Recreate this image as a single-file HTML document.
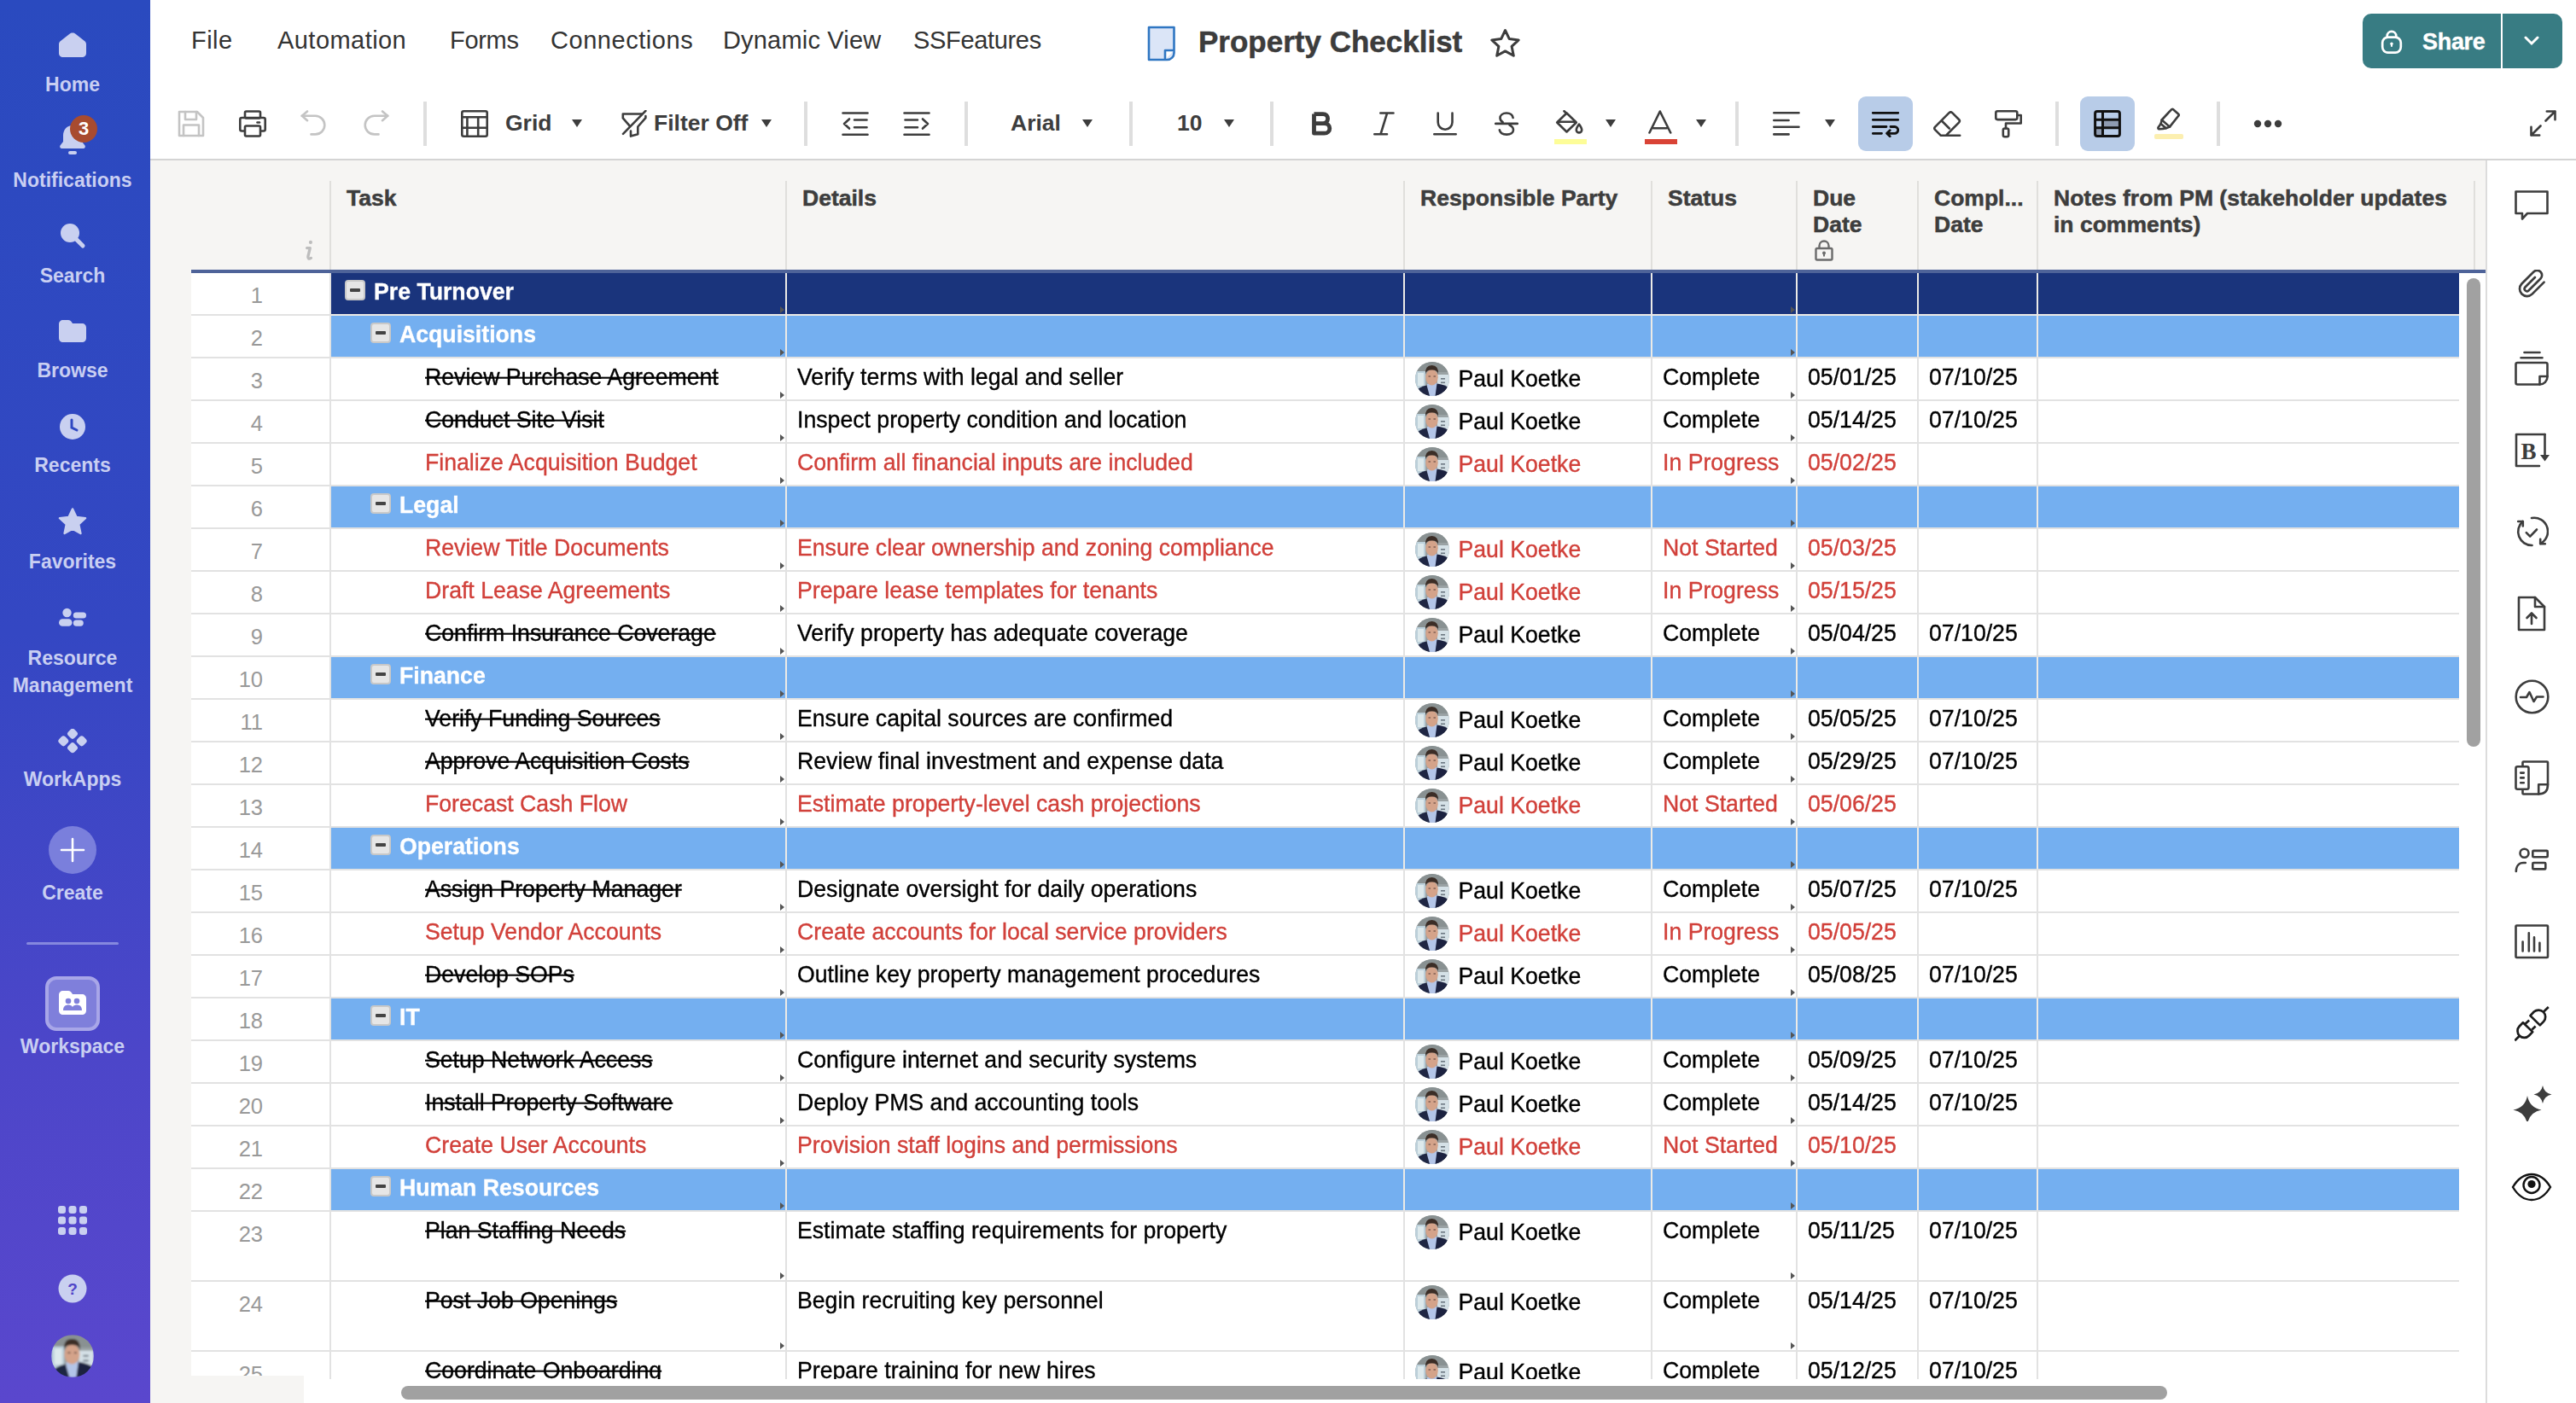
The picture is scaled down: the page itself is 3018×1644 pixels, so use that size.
<!DOCTYPE html>
<html><head><meta charset="utf-8">
<style>
*{box-sizing:border-box;margin:0;padding:0}
html,body{width:3018px;height:1644px;overflow:hidden;background:#fff;font-family:"Liberation Sans",sans-serif}
.abs{position:absolute}
#sb{position:absolute;left:0;top:0;width:176px;height:1644px;background:linear-gradient(180deg,#2a4abf 0%,#3447c3 45%,#4c46c9 75%,#5a47cd 100%)}
.sbi{position:absolute;left:-3px;width:176px;text-align:center;color:#c9cff2;font-weight:700;font-size:23px;line-height:27px}
.sbico{position:absolute}
#menu .m{position:absolute;top:27px;font-size:29px;line-height:40px;color:#333;white-space:nowrap;letter-spacing:0.45px}
#title{position:absolute;left:1404px;top:26.5px;-webkit-text-stroke:0.5px #3c3c3c;font-size:35px;font-weight:700;color:#3c3c3c;line-height:44px;white-space:nowrap;letter-spacing:0px}
#share{position:absolute;left:2768px;top:16px;width:234px;height:64px;background:#387c83;border-radius:10px}
.tsep{position:absolute;top:119px;width:4px;height:52px;background:#dedede}
.tt{position:absolute;top:126px;font-size:26.5px;font-weight:700;color:#3d3d3d;line-height:36px;white-space:nowrap}
.dd{position:absolute;top:140px;width:0;height:0;border-left:6px solid transparent;border-right:6px solid transparent;border-top:9px solid #3d3d3d}
.ico{position:absolute}
#tbline{position:absolute;left:176px;top:186px;width:2842px;height:2px;background:#d4d4d4}
#hdrbg{position:absolute;left:176px;top:188px;width:2736px;height:1456px;background:#f6f5f3}
.hsep{position:absolute;top:212px;width:2px;height:104px;background:#e0dfdc}
.ht{position:absolute;top:216.5px;margin-left:1px;font-size:26.5px;font-weight:700;color:#3d3d3d;line-height:31px;white-space:nowrap;-webkit-text-stroke:0.5px #3d3d3d}
#bluel{position:absolute;left:224px;top:316px;width:2688px;height:4px;background:#4e6399}
#gridclip{position:absolute;left:0;top:320px;width:3018px;height:1296px;overflow:hidden}
.row{position:absolute;left:224px;width:2657px;background:#e2e2e2}
.row>div{position:absolute}
.num{left:0;top:0;width:162px;background:#fff}
.gsep{background:#eceae6}
.numt{position:absolute;right:78px;top:11px;font-size:25.5px;line-height:30px;color:#999;}
.cell{top:0;background:#fff}
.t{top:0;font-size:26.67px;line-height:44px;white-space:nowrap;color:#000;-webkit-text-stroke:0.35px currentColor;transform:scaleY(1.04);transform-origin:0 31px}
.rr .t{color:#d1403a}
.rc .task{text-decoration:line-through;text-decoration-thickness:2px}
.gt{top:0;font-size:26.67px;line-height:44px;font-weight:700;color:#fff;white-space:nowrap;-webkit-text-stroke:0.35px #fff;transform:scaleY(1.04);transform-origin:0 31px}
.cbox{top:8px;width:24px;height:24px;background:#e6e6e6;border:2px solid #c8c8c8;border-radius:4px}
.cbox i{position:absolute;left:4px;top:8px;width:12px;height:4px;background:#444;border-radius:1px}
.tri{top:0;width:0;height:0;border-top:4px solid transparent;border-bottom:4px solid transparent;border-left:5px solid #555}
.av{position:absolute;left:1434px;top:4px}
#rp{position:absolute;left:2912px;top:188px;width:106px;height:1456px;background:#fff;border-left:2px solid #dcdcdc}
.rpi{position:absolute}
</style></head><body>
<svg width="0" height="0" style="position:absolute"><defs><filter id="avblur" x="-10%" y="-10%" width="120%" height="120%"><feGaussianBlur stdDeviation="0.7"/></filter></defs></svg>
<!-- SIDEBAR -->
<div id="sb">
 <svg class="sbico" style="left:68px;top:37px" width="34" height="31" viewBox="0 0 34 31"><path d="M17 1.5 C18.5 1.5 19.5 2 20.5 2.8 L31 11 C32.3 12 33 13.3 33 15 V25 C33 28.5 31 30 28 30 H6 C3 30 1 28.5 1 25 V15 C1 13.3 1.7 12 3 11 L13.5 2.8 C14.5 2 15.5 1.5 17 1.5Z" fill="#c9d0f0"/></svg>
 <div class="sbi" style="top:86px">Home</div>
 <svg class="sbico" style="left:68px;top:144px" width="36" height="40" viewBox="0 0 36 40"><path d="M17 3 C10 3 6 8.5 6 15 V22 L2.5 26.5 C1.5 28 2.5 30 4.5 30 H29.5 C31.5 30 32.5 28 31.5 26.5 L28 22 V15 C28 8.5 24 3 17 3Z" fill="#c9d0f0"/><rect x="12" y="33" width="10" height="4" rx="2" fill="#c9d0f0"/></svg>
 <div class="abs" style="left:82px;top:135px;width:32px;height:32px;border-radius:16px;background:#a84b2f;color:#fff;font-weight:700;font-size:22px;line-height:32px;text-align:center">3</div>
 <div class="sbi" style="top:198px">Notifications</div>
 <svg class="sbico" style="left:68px;top:259px" width="34" height="34" viewBox="0 0 34 34"><circle cx="14" cy="14" r="11" fill="#c9d0f0"/><path d="M21 21 L29 29" stroke="#c9d0f0" stroke-width="5" stroke-linecap="round"/></svg>
 <div class="sbi" style="top:310px">Search</div>
 <svg class="sbico" style="left:68px;top:374px" width="34" height="28" viewBox="0 0 34 28"><path d="M1 6 C1 3 3 1 6 1 H12 C14 1 15 2 16 3.5 L17 5 H28 C31 5 33 7 33 10 V22 C33 25 31 27 28 27 H6 C3 27 1 25 1 22Z" fill="#c9d0f0"/></svg>
 <div class="sbi" style="top:421px">Browse</div>
 <svg class="sbico" style="left:69px;top:484px" width="32" height="32" viewBox="0 0 32 32"><circle cx="16" cy="16" r="15" fill="#c9d0f0"/><path d="M15 8 V17 L21 20" stroke="#2f48c2" stroke-width="3" stroke-linecap="round" fill="none"/></svg>
 <div class="sbi" style="top:532px">Recents</div>
 <svg class="sbico" style="left:68px;top:595px" width="34" height="34" viewBox="0 0 34 34"><path d="M17 1.5 L21.5 11 L32 12.2 L24.2 19.4 L26.4 30 L17 24.6 L7.6 30 L9.8 19.4 L2 12.2 L12.5 11Z" fill="#c9d0f0" stroke="#c9d0f0" stroke-width="2.5" stroke-linejoin="round"/></svg>
 <div class="sbi" style="top:645px">Favorites</div>
 <svg class="sbico" style="left:68px;top:712px" width="34" height="24" viewBox="0 0 34 24"><circle cx="10.5" cy="6" r="5.2" fill="#c9d0f0"/><rect x="1" y="13.2" width="15.5" height="8.6" rx="4.3" fill="#c9d0f0"/><rect x="17.8" y="5.4" width="15.2" height="7" rx="3.5" fill="#c9d0f0"/><rect x="17.8" y="14.4" width="12" height="7.4" rx="3.7" fill="#c9d0f0"/></svg>
 <div class="sbi" style="top:755px;line-height:32px">Resource<br>Management</div>
 <svg class="sbico" style="left:67px;top:854px" width="36" height="32" viewBox="0 0 36 32"><rect x="12.9" y="0.7000000000000002" width="10.2" height="10.2" rx="3.2" transform="rotate(45 18 5.8)" fill="#c9d0f0"/><rect x="2.2" y="9.200000000000001" width="10.2" height="10.2" rx="3.2" transform="rotate(45 7.3 14.3)" fill="#c9d0f0"/><rect x="23.6" y="9.200000000000001" width="10.2" height="10.2" rx="3.2" transform="rotate(45 28.7 14.3)" fill="#c9d0f0"/><rect x="12.9" y="17.1" width="10.2" height="10.2" rx="3.2" transform="rotate(45 18 22.2)" fill="#c9d0f0"/></svg>
 <div class="sbi" style="top:900px">WorkApps</div>
 <div class="abs" style="left:57px;top:968px;width:56px;height:56px;border-radius:28px;background:#7a7fdc"></div>
 <svg class="sbico" style="left:70px;top:981px" width="30" height="30" viewBox="0 0 30 30"><path d="M15 2 V28 M2 15 H28" stroke="#fff" stroke-width="2.6" stroke-linecap="round"/></svg>
 <div class="sbi" style="top:1033px">Create</div>
 <div class="abs" style="left:31px;top:1104px;width:108px;height:3px;background:#8588de;border-radius:2px"></div>
 <div class="abs" style="left:53px;top:1144px;width:64px;height:64px;border-radius:13px;background:#7f7fdb;border:4px solid #a8a6e8"></div>
 <svg class="sbico" style="left:68px;top:1160px" width="34" height="30" viewBox="0 0 34 30"><path d="M1 6 C1 3 3 1 6 1 H12 C14 1 15 2 16 3.5 L17 5 H28 C31 5 33 7 33 10 V24 C33 27 31 29 28 29 H6 C3 29 1 27 1 24Z" fill="#fff"/><circle cx="12" cy="13" r="3.3" fill="#7f7fdb"/><circle cx="22" cy="13" r="3.3" fill="#7f7fdb"/><path d="M6 24 C6 19.5 8.5 17.5 12 17.5 C15.5 17.5 18 19.5 18 24Z M16 24 C16 19.5 18.5 17.5 22 17.5 C25.5 17.5 28 19.5 28 24Z" fill="#7f7fdb"/></svg>
 <div class="sbi" style="top:1213px">Workspace</div>
 <svg class="sbico" style="left:68px;top:1413px" width="34" height="34" viewBox="0 0 34 34"><g fill="#c9d0f0"><rect x="0" y="0" width="9" height="9" rx="3"/><rect x="12.5" y="0" width="9" height="9" rx="3"/><rect x="25" y="0" width="9" height="9" rx="3"/><rect x="0" y="12.5" width="9" height="9" rx="3"/><rect x="12.5" y="12.5" width="9" height="9" rx="3"/><rect x="25" y="12.5" width="9" height="9" rx="3"/><rect x="0" y="25" width="9" height="9" rx="3"/><rect x="12.5" y="25" width="9" height="9" rx="3"/><rect x="25" y="25" width="9" height="9" rx="3"/></g></svg>
 <svg class="sbico" style="left:68px;top:1493px" width="34" height="34" viewBox="0 0 34 34"><circle cx="17" cy="17" r="16.5" fill="#c9d0f0"/><text x="17" y="24" text-anchor="middle" font-family="Liberation Sans" font-weight="700" font-size="19" fill="#5046c8">?</text></svg>
 <svg class="sbico" style="left:60px;top:1564px" width="50" height="50" viewBox="0 0 40 40"><defs><clipPath id="avs"><circle cx="20" cy="20" r="20"/></clipPath></defs><g clip-path="url(#avs)"><g filter="url(#avblur)"><rect width="40" height="40" fill="#9aa2a4"/><rect x="0" y="0" width="40" height="12" fill="#899192"/><rect x="0" y="11" width="12" height="25" fill="#bcd0da"/><rect x="3" y="13" width="7" height="15" fill="#dde9ec"/><rect x="26" y="15" width="14" height="17" fill="#d5e1e7"/><rect x="30" y="19" width="5" height="1.6" fill="#6d7882"/><rect x="30" y="23.5" width="5" height="1.6" fill="#6d7882"/><rect x="30" y="28" width="5" height="1.6" fill="#6d7882"/><rect x="34" y="30" width="6" height="7" fill="#141820"/><path d="M14 26 L26 25 L25.5 40 L14.5 40 Z" fill="#b3c5e8"/><path d="M0 40 V35 Q5 29 13.5 27.5 L17 40 Z" fill="#1f2643"/><path d="M25.5 25.5 Q34 26.5 40 30.5 V40 H23.5 Z" fill="#1c2240"/><ellipse cx="19.5" cy="18.2" rx="7.2" ry="9.4" fill="#d4a38a"/><path d="M12 14.5 Q11.3 4 19.5 4 Q27.7 4 27 14.5 Q26 9.2 19.5 9.6 Q13 9.2 12 14.5Z" fill="#3b2d26"/><path d="M15.5 17 H18 M21.5 17 H24" stroke="#5a4038" stroke-width="1.2"/></g></g></svg>
</div>

<!-- MENU -->
<div id="menu">
 <div class="m" style="left:224px">File</div>
 <div class="m" style="left:325px">Automation</div>
 <div class="m" style="left:527px;letter-spacing:-0.3px">Forms</div>
 <div class="m" style="left:645px;letter-spacing:0.55px">Connections</div>
 <div class="m" style="left:847px;letter-spacing:0.18px">Dynamic View</div>
 <div class="m" style="left:1070px;letter-spacing:-0.33px">SSFeatures</div>
</div>
<svg class="ico" style="left:1344px;top:30px" width="34" height="42" viewBox="0 0 34 42"><path d="M2 2 H31.5 V32 C31.5 36.5 28 40 23.5 40 H2Z" fill="#dbe5f7" stroke="#2f76c2" stroke-width="2.6" stroke-linejoin="round"/><path d="M31.5 29 H21 V40" fill="#fff" stroke="#2f76c2" stroke-width="2.6" stroke-linejoin="round"/></svg>
<div id="title">Property Checklist</div>
<svg class="ico" style="left:1745px;top:33px" width="37" height="37" viewBox="0 0 37 37"><path d="M18.5 2.5 L23.3 12.6 L34.2 13.9 L26.1 21.4 L28.3 32.3 L18.5 26.9 L8.7 32.3 L10.9 21.4 L2.8 13.9 L13.7 12.6Z" fill="none" stroke="#3d3d3d" stroke-width="3" stroke-linejoin="round"/></svg>
<div id="share">
 <svg class="ico" style="left:21px;top:18px" width="26" height="30" viewBox="0 0 26 30"><path d="M7.7 10.5 V8.2 A5.3 5.3 0 0 1 18.3 8.2 V10.5" fill="none" stroke="#fff" stroke-width="2.7"/><rect x="2.2" y="9.6" width="21.6" height="18" rx="6.5" fill="none" stroke="#fff" stroke-width="2.7"/><circle cx="13" cy="17.2" r="1.7" fill="#fff"/><rect x="12" y="17.2" width="2" height="3.8" rx="1" fill="#fff"/></svg>
 <div class="abs" style="left:70px;top:14.5px;font-size:27px;font-weight:700;color:#fff;line-height:36px;letter-spacing:-0.3px;-webkit-text-stroke:0.4px #fff">Share</div>
 <div class="abs" style="left:162px;top:0;width:2px;height:64px;background:#fff"></div>
 <svg class="ico" style="left:189px;top:26px" width="18" height="12" viewBox="0 0 18 12"><path d="M2 2 L9 9 L16 2" fill="none" stroke="#fff" stroke-width="3" stroke-linecap="round"/></svg>
</div>

<!-- TOOLBAR -->
<svg class="ico" style="left:208px;top:129px" width="32" height="32" viewBox="0 0 32 32"><path d="M2 2 H23 L30 9 V30 H2 Z" stroke="#c4c4c4" stroke-width="2.6" fill="none" stroke-linecap="round" stroke-linejoin="round"/><path d="M9 2 V11 H22 V2" stroke="#c4c4c4" stroke-width="2.6" fill="none" stroke-linecap="round" stroke-linejoin="round"/><path d="M7 30 V17.5 H25 V30" stroke="#c4c4c4" stroke-width="2.6" fill="none" stroke-linecap="round" stroke-linejoin="round"/></svg>
<svg class="ico" style="left:280px;top:129px" width="32" height="32" viewBox="0 0 32 32"><rect x="7" y="1.5" width="18" height="8" rx="1.5" stroke="#3d3d3d" stroke-width="2.6" fill="none" stroke-linecap="round" stroke-linejoin="round"/><rect x="1.3" y="9" width="29.4" height="15.5" rx="2" stroke="#3d3d3d" stroke-width="2.6" fill="none" stroke-linecap="round" stroke-linejoin="round"/><rect x="7" y="18.5" width="18" height="12" rx="1.5" fill="#fff" stroke="#3d3d3d" stroke-width="2.6"/><path d="M21.5 14.5 H24" stroke="#3d3d3d" stroke-width="2.6" fill="none" stroke-linecap="round" stroke-linejoin="round"/></svg>
<svg class="ico" style="left:352px;top:129px" width="32" height="32" viewBox="0 0 32 32"><path d="M8 1.5 L1.8 6.8 L8 12.2" stroke="#c4c4c4" stroke-width="2.6" fill="none" stroke-linecap="round" stroke-linejoin="round"/><path d="M1.8 6.8 H17.5 A10.8 10.8 0 0 1 17.5 28.4 H12.5" stroke="#c4c4c4" stroke-width="2.6" fill="none" stroke-linecap="round" stroke-linejoin="round"/></svg>
<svg class="ico" style="left:424px;top:129px" width="32" height="32" viewBox="0 0 32 32"><path d="M24 1.5 L30.2 6.8 L24 12.2" stroke="#c4c4c4" stroke-width="2.6" fill="none" stroke-linecap="round" stroke-linejoin="round"/><path d="M30.2 6.8 H14.5 A10.8 10.8 0 0 0 14.5 28.4 H19.5" stroke="#c4c4c4" stroke-width="2.6" fill="none" stroke-linecap="round" stroke-linejoin="round"/></svg>
<div class="tsep" style="left:496px"></div>
<svg class="ico" style="left:540px;top:129px" width="32" height="32" viewBox="0 0 32 32"><rect x="1.3" y="1.3" width="29.4" height="29.4" rx="2" stroke="#3d3d3d" stroke-width="2.6" fill="none" stroke-linecap="round" stroke-linejoin="round"/><path d="M1.3 8.3 H30.7 M1.3 20.8 H30.7 M7.4 8.3 V30.7 M20.2 8.3 V30.7" stroke="#3d3d3d" stroke-width="2.6" fill="none" stroke-linecap="round" stroke-linejoin="round"/></svg>
<div class="tt" style="left:592px">Grid</div>
<div class="dd" style="left:670px"></div>
<svg class="ico" style="left:728px;top:129px" width="30" height="32" viewBox="0 0 30 32"><path d="M24 4.5 H1.8 V9.4 L9.6 18.4 M28.4 7 V9.2 L19.3 19.5 V28.2 L11 30.6 V24.6" stroke="#3d3d3d" stroke-width="2.6" fill="none" stroke-linecap="round" stroke-linejoin="round"/><path d="M2 27.8 L28.4 0.9" stroke="#3d3d3d" stroke-width="2.6" fill="none" stroke-linecap="round" stroke-linejoin="round"/></svg>
<div class="tt" style="left:766px">Filter Off</div>
<div class="dd" style="left:892px"></div>
<div class="tsep" style="left:942px"></div>
<svg class="ico" style="left:986px;top:131px" width="32" height="28" viewBox="0 0 32 28"><path d="M1.5 1.5 H30.5 M15 9.5 H29.5 M15 18.3 H29.5 M1.5 26.7 H30.5 M9 8.5 L3 14 L9 19.5" stroke="#3d3d3d" stroke-width="2.6" fill="none" stroke-linecap="round" stroke-linejoin="round"/></svg>
<svg class="ico" style="left:1058px;top:131px" width="32" height="28" viewBox="0 0 32 28"><path d="M1.5 1.5 H30.5 M2.5 9.5 H17 M2.5 18.3 H17 M1.5 26.7 H30.5 M23 8.5 L29 14 L23 19.5" stroke="#3d3d3d" stroke-width="2.6" fill="none" stroke-linecap="round" stroke-linejoin="round"/></svg>
<div class="tsep" style="left:1130px"></div>
<div class="tt" style="left:1184px">Arial</div>
<div class="dd" style="left:1268px"></div>
<div class="tsep" style="left:1323px"></div>
<div class="tt" style="left:1379px">10</div>
<div class="dd" style="left:1434px"></div>
<div class="tsep" style="left:1488px"></div>
<svg class="ico" style="left:1537px;top:131px" width="24" height="28" viewBox="0 0 24 28"><path d="M2.5 2.6 H13 C16.6 2.6 18.6 5 18.6 8.1 C18.6 11.2 16.6 13.6 13 13.6 H2.5 M13 13.6 H14.6 C18.2 13.6 20.8 16 20.8 19.4 C20.8 22.8 18.2 25.2 14.6 25.2 H2.5 V2.6" stroke="#3d3d3d" stroke-width="4.8" fill="none" stroke-linejoin="round"/></svg>
<svg class="ico" style="left:1609px;top:131px" width="26" height="28" viewBox="0 0 26 28"><path d="M8.3 1.5 H23.5 M1.3 26.3 H16 M16 1.8 L8.6 26" stroke="#3d3d3d" stroke-width="2.6" fill="none" stroke-linecap="round" stroke-linejoin="round"/></svg>
<svg class="ico" style="left:1679px;top:131px" width="28" height="28" viewBox="0 0 28 28"><path d="M5.7 1.5 V12.3 A8.4 8.4 0 0 0 22.5 12.3 V1.5 M1.3 26.3 H26.7" stroke="#3d3d3d" stroke-width="2.6" fill="none" stroke-linecap="round" stroke-linejoin="round"/></svg>
<svg class="ico" style="left:1751px;top:131px" width="28" height="28" viewBox="0 0 28 28"><path d="M21.6 7 C21 3.5 18 1.5 14 1.5 C9.5 1.5 6.5 4 6.5 7.3 C6.5 9.6 7.6 11 9.6 12.2 M17.6 15.6 C20.3 16.8 22 18.6 22 21.2 C22 24.6 18.8 26.6 14.2 26.6 C9.6 26.6 6.4 24.6 5.8 21.3 M1.2 13.9 H26.8" stroke="#3d3d3d" stroke-width="2.6" fill="none" stroke-linecap="round" stroke-linejoin="round"/></svg>
<svg class="ico" style="left:1821px;top:129px" width="38" height="40" viewBox="0 0 38 40"><path d="M14.5 3.5 L25.8 14.5 L14.5 25.5 L3.2 14.5 Z" stroke="#3d3d3d" stroke-width="2.6" fill="none" stroke-linecap="round" stroke-linejoin="round"/><path d="M4.5 13.8 H24.5 M11.5 1.2 L14.5 4" stroke="#3d3d3d" stroke-width="2.6" fill="none" stroke-linecap="round" stroke-linejoin="round"/><path d="M29 16.5 C27.2 19 25.8 21 25.8 23.2 C25.8 25 27.2 26.4 29 26.4 C30.8 26.4 32.2 25 32.2 23.2 C32.2 21 30.8 19 29 16.5Z" stroke="#3d3d3d" stroke-width="2.6" fill="none" stroke-linecap="round" stroke-linejoin="round"/><rect x="0" y="34" width="38" height="6" fill="#fdfd98"/></svg>
<div class="dd" style="left:1881px"></div>
<svg class="ico" style="left:1927px;top:129px" width="38" height="40" viewBox="0 0 38 40"><path d="M5.5 26.5 L17.8 1.5 L30.2 26.5 M10 21.2 H25.5" stroke="#3d3d3d" stroke-width="2.6" fill="none" stroke-linecap="round" stroke-linejoin="round"/><rect x="0" y="34" width="38" height="6" fill="#d94336"/></svg>
<div class="dd" style="left:1987px"></div>
<div class="tsep" style="left:2033px"></div>
<svg class="ico" style="left:2077px;top:131px" width="32" height="28" viewBox="0 0 32 28"><path d="M1.3 1.3 H30.5 M1.3 10 H18.6 M1.3 17.7 H30.5 M1.3 26.4 H18.6" stroke="#3d3d3d" stroke-width="2.6" fill="none" stroke-linecap="round" stroke-linejoin="round"/></svg>
<div class="dd" style="left:2138px"></div>
<div class="abs" style="left:2177px;top:113px;width:64px;height:64px;border-radius:9px;background:#b8cce8"></div>
<svg class="ico" style="left:2193px;top:131px" width="32" height="30" viewBox="0 0 32 30"><path d="M1.3 1.3 H30.7 M1.3 9.4 H30.7 M1.3 17.5 H17 M1.3 25.3 H11.5 M22 17.5 H26.8 A3.9 3.9 0 0 1 26.8 25.3 H18.5 M21.2 21.8 L17.6 25.3 L21.2 28.8" stroke="#111" stroke-width="2.8" fill="none" stroke-linecap="round" stroke-linejoin="round"/></svg>
<svg class="ico" style="left:2265px;top:130px" width="33" height="31" viewBox="0 0 33 31"><path d="M8.7 28.7 L2.2 22.2 C1.2 21.2 1.2 19.6 2.2 18.6 L18.6 2.2 C19.6 1.2 21.2 1.2 22.2 2.2 L30 10 C31 11 31 12.6 30 13.6 L15 28.7 Z M9.8 11.5 L18.8 20.5 M8.7 28.7 H31.2" stroke="#3d3d3d" stroke-width="2.6" fill="none" stroke-linecap="round" stroke-linejoin="round"/></svg>
<svg class="ico" style="left:2337px;top:129px" width="33" height="33" viewBox="0 0 33 33"><rect x="1.3" y="1.3" width="25" height="9.8" rx="2" stroke="#3d3d3d" stroke-width="2.6" fill="none" stroke-linecap="round" stroke-linejoin="round"/><path d="M26.3 6 H30.7 V15.5 H13 V21.5" stroke="#3d3d3d" stroke-width="2.6" fill="none" stroke-linecap="round" stroke-linejoin="round"/><rect x="9.8" y="21.5" width="6.4" height="9.8" rx="2" stroke="#3d3d3d" stroke-width="2.6" fill="none" stroke-linecap="round" stroke-linejoin="round"/></svg>
<div class="tsep" style="left:2408px"></div>
<div class="abs" style="left:2437px;top:113px;width:64px;height:64px;border-radius:9px;background:#b8cce8"></div>
<svg class="ico" style="left:2453px;top:129px" width="32" height="32" viewBox="0 0 32 32"><rect x="11.5" y="12.5" width="18" height="8" fill="#8e9bb1"/><rect x="2.5" y="21.5" width="7.5" height="8" fill="#8e9bb1"/><rect x="1.6" y="1.6" width="28.8" height="28.8" rx="2.5" stroke="#111" stroke-width="3" fill="none"/><path d="M10.5 1.6 V30.4 M1.6 11.3 H30.4 M1.6 20.7 H30.4" stroke="#111" stroke-width="3" fill="none"/></svg>
<svg class="ico" style="left:2524px;top:126px" width="34" height="38" viewBox="0 0 34 38"><path d="M19.8 2.6 C20.4 1.8 21.4 1.7 22.1 2.3 L28 7.5 C28.7 8.1 28.8 9.1 28.2 9.8 L18 22.6 L8.7 14.5 Z" stroke="#3d3d3d" stroke-width="2.6" fill="none" stroke-linecap="round" stroke-linejoin="round"/><path d="M8.7 14.5 L7.6 19 L13.6 24.2 L18 22.6" stroke="#3d3d3d" stroke-width="2.6" fill="none" stroke-linecap="round" stroke-linejoin="round"/><path d="M7.6 19 L4.6 23.2 C4 24.1 4.6 25.3 5.7 25.2 L9.8 24.9 L13.6 24.2" stroke="#3d3d3d" stroke-width="2.6" fill="none" stroke-linecap="round" stroke-linejoin="round"/><rect x="0" y="31" width="34" height="6" rx="2" fill="#fcefb0"/></svg>
<div class="tsep" style="left:2597px"></div>
<svg class="ico" style="left:2637px;top:137px" width="40" height="16" viewBox="0 0 40 16"><circle cx="8" cy="8" r="4.2" fill="#3d3d3d"/><circle cx="20" cy="8" r="4.2" fill="#3d3d3d"/><circle cx="32" cy="8" r="4.2" fill="#3d3d3d"/></svg>
<svg class="ico" style="left:2964px;top:129px" width="32" height="32" viewBox="0 0 32 32"><path d="M18.5 12.5 L29.5 1.5 M19.8 1.5 H29.5 V11.2 M12.5 18.5 L1.5 29.5 M1.5 19.8 V29.5 H11.2" stroke="#3d3d3d" stroke-width="2.6" fill="none" stroke-linecap="round" stroke-linejoin="round"/></svg>
<div id="tbline"></div>

<!-- GRID -->
<div id="hdrbg"></div>
<div class="hsep" style="left:386px"></div>
<div class="hsep" style="left:920px"></div>
<div class="hsep" style="left:1644px"></div>
<div class="hsep" style="left:1934px"></div>
<div class="hsep" style="left:2104px"></div>
<div class="hsep" style="left:2246px"></div>
<div class="hsep" style="left:2386px"></div>
<div class="hsep" style="left:2898px"></div>
<svg class="ico" style="left:350px;top:280px" width="24" height="30" viewBox="0 0 24 30"><circle cx="13.9" cy="3.9" r="2.1" fill="#bdbdbd"/><path d="M9.6 10.6 H13.3 L10.9 20.4 C10.4 22.6 11.6 24 14.4 22.4" stroke="#bdbdbd" stroke-width="3.3" fill="none" stroke-linecap="round" stroke-linejoin="round"/></svg>
<div class="ht" style="left:405px">Task</div>
<div class="ht" style="left:939px">Details</div>
<div class="ht" style="left:1663px">Responsible Party</div>
<div class="ht" style="left:1953px">Status</div>
<div class="ht" style="left:2123px">Due<br>Date</div>
<svg class="ico" style="left:2126px;top:281px" width="22" height="25" viewBox="0 0 22 25"><path d="M5.5 10 V7 C5.5 3.8 8 1.5 11 1.5 C14 1.5 16.5 3.8 16.5 7 V10" fill="none" stroke="#6b6b6b" stroke-width="2.4"/><rect x="1.5" y="10" width="19" height="13.5" rx="1.5" fill="none" stroke="#6b6b6b" stroke-width="2.4"/><circle cx="11" cy="15.5" r="2" fill="#6b6b6b"/><rect x="10" y="15.5" width="2" height="4" fill="#6b6b6b"/></svg>
<div class="ht" style="left:2265px">Compl...<br>Date</div>
<div class="ht" style="left:2405px">Notes from PM (stakeholder updates<br>in comments)</div>
<div id="bluel"></div>
<div id="gridclip">
<div class="row rg1" style="top:0px;height:50px">
<div class="num" style="height:48px"><span class="numt">1</span></div>
<div class="gsep" style="left:164px;width:2493px;top:0;height:50px"></div>
<div class="cell" style="left:164px;width:532px;height:48px;background:#1a347c"></div>
<div class="cell" style="left:698px;width:722px;height:48px;background:#1a347c"></div>
<div class="cell" style="left:1422px;width:288px;height:48px;background:#1a347c"></div>
<div class="cell" style="left:1712px;width:168px;height:48px;background:#1a347c"></div>
<div class="cell" style="left:1882px;width:140px;height:48px;background:#1a347c"></div>
<div class="cell" style="left:2024px;width:138px;height:48px;background:#1a347c"></div>
<div class="cell" style="left:2164px;width:493px;height:48px;background:#1a347c"></div>
<div class="cbox" style="left:180px"><i></i></div>
<div class="gt" style="left:214px">Pre Turnover</div>
<div class="tri" style="left:690px;top:39px"></div><div class="tri" style="left:1874px;top:39px"></div>
</div>
<div class="row rg2" style="top:50px;height:50px">
<div class="num" style="height:48px"><span class="numt">2</span></div>
<div class="gsep" style="left:164px;width:2493px;top:0;height:48px"></div>
<div class="cell" style="left:164px;width:532px;height:48px;background:#74aff0"></div>
<div class="cell" style="left:698px;width:722px;height:48px;background:#74aff0"></div>
<div class="cell" style="left:1422px;width:288px;height:48px;background:#74aff0"></div>
<div class="cell" style="left:1712px;width:168px;height:48px;background:#74aff0"></div>
<div class="cell" style="left:1882px;width:140px;height:48px;background:#74aff0"></div>
<div class="cell" style="left:2024px;width:138px;height:48px;background:#74aff0"></div>
<div class="cell" style="left:2164px;width:493px;height:48px;background:#74aff0"></div>
<div class="cbox" style="left:210px"><i></i></div>
<div class="gt" style="left:244px">Acquisitions</div>
<div class="tri" style="left:690px;top:39px"></div><div class="tri" style="left:1874px;top:39px"></div>
</div>
<div class="row rc" style="top:100px;height:50px">
<div class="num" style="height:48px"><span class="numt">3</span></div>
<div class="cell" style="left:164px;width:532px;height:48px;background:#fff"></div>
<div class="cell" style="left:698px;width:722px;height:48px;background:#fff"></div>
<div class="cell" style="left:1422px;width:288px;height:48px;background:#fff"></div>
<div class="cell" style="left:1712px;width:168px;height:48px;background:#fff"></div>
<div class="cell" style="left:1882px;width:140px;height:48px;background:#fff"></div>
<div class="cell" style="left:2024px;width:138px;height:48px;background:#fff"></div>
<div class="cell" style="left:2164px;width:493px;height:48px;background:#fff"></div>
<div class="t task" style="left:274px">Review Purchase Agreement</div>
<div class="t det" style="left:710px">Verify terms with legal and seller</div>
<svg class="av" viewBox="0 0 40 40" width="40" height="40"><defs><clipPath id="avc3"><circle cx="20" cy="20" r="20"/></clipPath></defs><g clip-path="url(#avc3)"><rect width="40" height="40" fill="#9aa2a4"/><rect x="0" y="0" width="40" height="12" fill="#899192"/><rect x="0" y="11" width="12" height="25" fill="#bcd0da"/><rect x="3" y="13" width="7" height="15" fill="#dde9ec"/><rect x="26" y="15" width="14" height="17" fill="#d5e1e7"/><rect x="30" y="19" width="5" height="1.6" fill="#6d7882"/><rect x="30" y="23.5" width="5" height="1.6" fill="#6d7882"/><rect x="30" y="28" width="5" height="1.6" fill="#6d7882"/><rect x="34" y="30" width="6" height="7" fill="#141820"/><path d="M14 26 L26 25 L25.5 40 L14.5 40 Z" fill="#b3c5e8"/><path d="M0 40 V35 Q5 29 13.5 27.5 L17 40 Z" fill="#1f2643"/><path d="M25.5 25.5 Q34 26.5 40 30.5 V40 H23.5 Z" fill="#1c2240"/><ellipse cx="19.5" cy="18.2" rx="7.2" ry="9.4" fill="#d4a38a"/><path d="M12 14.5 Q11.3 4 19.5 4 Q27.7 4 27 14.5 Q26 9.2 19.5 9.6 Q13 9.2 12 14.5Z" fill="#3b2d26"/><path d="M15.5 17 H18 M21.5 17 H24" stroke="#5a4038" stroke-width="1.2"/></g></svg>
<div class="t rp" style="left:1484.5px;top:2px">Paul Koetke</div>
<div class="t st" style="left:1724px">Complete</div>
<div class="t due" style="left:1894px">05/01/25</div>
<div class="t cmp" style="left:2036px">07/10/25</div>
<div class="tri" style="left:690px;top:39px"></div><div class="tri" style="left:1874px;top:39px"></div>
</div>
<div class="row rc" style="top:150px;height:50px">
<div class="num" style="height:48px"><span class="numt">4</span></div>
<div class="cell" style="left:164px;width:532px;height:48px;background:#fff"></div>
<div class="cell" style="left:698px;width:722px;height:48px;background:#fff"></div>
<div class="cell" style="left:1422px;width:288px;height:48px;background:#fff"></div>
<div class="cell" style="left:1712px;width:168px;height:48px;background:#fff"></div>
<div class="cell" style="left:1882px;width:140px;height:48px;background:#fff"></div>
<div class="cell" style="left:2024px;width:138px;height:48px;background:#fff"></div>
<div class="cell" style="left:2164px;width:493px;height:48px;background:#fff"></div>
<div class="t task" style="left:274px">Conduct Site Visit</div>
<div class="t det" style="left:710px">Inspect property condition and location</div>
<svg class="av" viewBox="0 0 40 40" width="40" height="40"><defs><clipPath id="avc4"><circle cx="20" cy="20" r="20"/></clipPath></defs><g clip-path="url(#avc4)"><rect width="40" height="40" fill="#9aa2a4"/><rect x="0" y="0" width="40" height="12" fill="#899192"/><rect x="0" y="11" width="12" height="25" fill="#bcd0da"/><rect x="3" y="13" width="7" height="15" fill="#dde9ec"/><rect x="26" y="15" width="14" height="17" fill="#d5e1e7"/><rect x="30" y="19" width="5" height="1.6" fill="#6d7882"/><rect x="30" y="23.5" width="5" height="1.6" fill="#6d7882"/><rect x="30" y="28" width="5" height="1.6" fill="#6d7882"/><rect x="34" y="30" width="6" height="7" fill="#141820"/><path d="M14 26 L26 25 L25.5 40 L14.5 40 Z" fill="#b3c5e8"/><path d="M0 40 V35 Q5 29 13.5 27.5 L17 40 Z" fill="#1f2643"/><path d="M25.5 25.5 Q34 26.5 40 30.5 V40 H23.5 Z" fill="#1c2240"/><ellipse cx="19.5" cy="18.2" rx="7.2" ry="9.4" fill="#d4a38a"/><path d="M12 14.5 Q11.3 4 19.5 4 Q27.7 4 27 14.5 Q26 9.2 19.5 9.6 Q13 9.2 12 14.5Z" fill="#3b2d26"/><path d="M15.5 17 H18 M21.5 17 H24" stroke="#5a4038" stroke-width="1.2"/></g></svg>
<div class="t rp" style="left:1484.5px;top:2px">Paul Koetke</div>
<div class="t st" style="left:1724px">Complete</div>
<div class="t due" style="left:1894px">05/14/25</div>
<div class="t cmp" style="left:2036px">07/10/25</div>
<div class="tri" style="left:690px;top:39px"></div><div class="tri" style="left:1874px;top:39px"></div>
</div>
<div class="row rr" style="top:200px;height:50px">
<div class="num" style="height:48px"><span class="numt">5</span></div>
<div class="cell" style="left:164px;width:532px;height:48px;background:#fff"></div>
<div class="cell" style="left:698px;width:722px;height:48px;background:#fff"></div>
<div class="cell" style="left:1422px;width:288px;height:48px;background:#fff"></div>
<div class="cell" style="left:1712px;width:168px;height:48px;background:#fff"></div>
<div class="cell" style="left:1882px;width:140px;height:48px;background:#fff"></div>
<div class="cell" style="left:2024px;width:138px;height:48px;background:#fff"></div>
<div class="cell" style="left:2164px;width:493px;height:48px;background:#fff"></div>
<div class="t task" style="left:274px">Finalize Acquisition Budget</div>
<div class="t det" style="left:710px">Confirm all financial inputs are included</div>
<svg class="av" viewBox="0 0 40 40" width="40" height="40"><defs><clipPath id="avc5"><circle cx="20" cy="20" r="20"/></clipPath></defs><g clip-path="url(#avc5)"><rect width="40" height="40" fill="#9aa2a4"/><rect x="0" y="0" width="40" height="12" fill="#899192"/><rect x="0" y="11" width="12" height="25" fill="#bcd0da"/><rect x="3" y="13" width="7" height="15" fill="#dde9ec"/><rect x="26" y="15" width="14" height="17" fill="#d5e1e7"/><rect x="30" y="19" width="5" height="1.6" fill="#6d7882"/><rect x="30" y="23.5" width="5" height="1.6" fill="#6d7882"/><rect x="30" y="28" width="5" height="1.6" fill="#6d7882"/><rect x="34" y="30" width="6" height="7" fill="#141820"/><path d="M14 26 L26 25 L25.5 40 L14.5 40 Z" fill="#b3c5e8"/><path d="M0 40 V35 Q5 29 13.5 27.5 L17 40 Z" fill="#1f2643"/><path d="M25.5 25.5 Q34 26.5 40 30.5 V40 H23.5 Z" fill="#1c2240"/><ellipse cx="19.5" cy="18.2" rx="7.2" ry="9.4" fill="#d4a38a"/><path d="M12 14.5 Q11.3 4 19.5 4 Q27.7 4 27 14.5 Q26 9.2 19.5 9.6 Q13 9.2 12 14.5Z" fill="#3b2d26"/><path d="M15.5 17 H18 M21.5 17 H24" stroke="#5a4038" stroke-width="1.2"/></g></svg>
<div class="t rp" style="left:1484.5px;top:2px">Paul Koetke</div>
<div class="t st" style="left:1724px">In Progress</div>
<div class="t due" style="left:1894px">05/02/25</div>
<div class="tri" style="left:690px;top:39px"></div><div class="tri" style="left:1874px;top:39px"></div>
</div>
<div class="row rg2" style="top:250px;height:50px">
<div class="num" style="height:48px"><span class="numt">6</span></div>
<div class="gsep" style="left:164px;width:2493px;top:0;height:48px"></div>
<div class="cell" style="left:164px;width:532px;height:48px;background:#74aff0"></div>
<div class="cell" style="left:698px;width:722px;height:48px;background:#74aff0"></div>
<div class="cell" style="left:1422px;width:288px;height:48px;background:#74aff0"></div>
<div class="cell" style="left:1712px;width:168px;height:48px;background:#74aff0"></div>
<div class="cell" style="left:1882px;width:140px;height:48px;background:#74aff0"></div>
<div class="cell" style="left:2024px;width:138px;height:48px;background:#74aff0"></div>
<div class="cell" style="left:2164px;width:493px;height:48px;background:#74aff0"></div>
<div class="cbox" style="left:210px"><i></i></div>
<div class="gt" style="left:244px">Legal</div>
<div class="tri" style="left:690px;top:39px"></div><div class="tri" style="left:1874px;top:39px"></div>
</div>
<div class="row rr" style="top:300px;height:50px">
<div class="num" style="height:48px"><span class="numt">7</span></div>
<div class="cell" style="left:164px;width:532px;height:48px;background:#fff"></div>
<div class="cell" style="left:698px;width:722px;height:48px;background:#fff"></div>
<div class="cell" style="left:1422px;width:288px;height:48px;background:#fff"></div>
<div class="cell" style="left:1712px;width:168px;height:48px;background:#fff"></div>
<div class="cell" style="left:1882px;width:140px;height:48px;background:#fff"></div>
<div class="cell" style="left:2024px;width:138px;height:48px;background:#fff"></div>
<div class="cell" style="left:2164px;width:493px;height:48px;background:#fff"></div>
<div class="t task" style="left:274px">Review Title Documents</div>
<div class="t det" style="left:710px">Ensure clear ownership and zoning compliance</div>
<svg class="av" viewBox="0 0 40 40" width="40" height="40"><defs><clipPath id="avc7"><circle cx="20" cy="20" r="20"/></clipPath></defs><g clip-path="url(#avc7)"><rect width="40" height="40" fill="#9aa2a4"/><rect x="0" y="0" width="40" height="12" fill="#899192"/><rect x="0" y="11" width="12" height="25" fill="#bcd0da"/><rect x="3" y="13" width="7" height="15" fill="#dde9ec"/><rect x="26" y="15" width="14" height="17" fill="#d5e1e7"/><rect x="30" y="19" width="5" height="1.6" fill="#6d7882"/><rect x="30" y="23.5" width="5" height="1.6" fill="#6d7882"/><rect x="30" y="28" width="5" height="1.6" fill="#6d7882"/><rect x="34" y="30" width="6" height="7" fill="#141820"/><path d="M14 26 L26 25 L25.5 40 L14.5 40 Z" fill="#b3c5e8"/><path d="M0 40 V35 Q5 29 13.5 27.5 L17 40 Z" fill="#1f2643"/><path d="M25.5 25.5 Q34 26.5 40 30.5 V40 H23.5 Z" fill="#1c2240"/><ellipse cx="19.5" cy="18.2" rx="7.2" ry="9.4" fill="#d4a38a"/><path d="M12 14.5 Q11.3 4 19.5 4 Q27.7 4 27 14.5 Q26 9.2 19.5 9.6 Q13 9.2 12 14.5Z" fill="#3b2d26"/><path d="M15.5 17 H18 M21.5 17 H24" stroke="#5a4038" stroke-width="1.2"/></g></svg>
<div class="t rp" style="left:1484.5px;top:2px">Paul Koetke</div>
<div class="t st" style="left:1724px">Not Started</div>
<div class="t due" style="left:1894px">05/03/25</div>
<div class="tri" style="left:690px;top:39px"></div><div class="tri" style="left:1874px;top:39px"></div>
</div>
<div class="row rr" style="top:350px;height:50px">
<div class="num" style="height:48px"><span class="numt">8</span></div>
<div class="cell" style="left:164px;width:532px;height:48px;background:#fff"></div>
<div class="cell" style="left:698px;width:722px;height:48px;background:#fff"></div>
<div class="cell" style="left:1422px;width:288px;height:48px;background:#fff"></div>
<div class="cell" style="left:1712px;width:168px;height:48px;background:#fff"></div>
<div class="cell" style="left:1882px;width:140px;height:48px;background:#fff"></div>
<div class="cell" style="left:2024px;width:138px;height:48px;background:#fff"></div>
<div class="cell" style="left:2164px;width:493px;height:48px;background:#fff"></div>
<div class="t task" style="left:274px">Draft Lease Agreements</div>
<div class="t det" style="left:710px">Prepare lease templates for tenants</div>
<svg class="av" viewBox="0 0 40 40" width="40" height="40"><defs><clipPath id="avc8"><circle cx="20" cy="20" r="20"/></clipPath></defs><g clip-path="url(#avc8)"><rect width="40" height="40" fill="#9aa2a4"/><rect x="0" y="0" width="40" height="12" fill="#899192"/><rect x="0" y="11" width="12" height="25" fill="#bcd0da"/><rect x="3" y="13" width="7" height="15" fill="#dde9ec"/><rect x="26" y="15" width="14" height="17" fill="#d5e1e7"/><rect x="30" y="19" width="5" height="1.6" fill="#6d7882"/><rect x="30" y="23.5" width="5" height="1.6" fill="#6d7882"/><rect x="30" y="28" width="5" height="1.6" fill="#6d7882"/><rect x="34" y="30" width="6" height="7" fill="#141820"/><path d="M14 26 L26 25 L25.5 40 L14.5 40 Z" fill="#b3c5e8"/><path d="M0 40 V35 Q5 29 13.5 27.5 L17 40 Z" fill="#1f2643"/><path d="M25.5 25.5 Q34 26.5 40 30.5 V40 H23.5 Z" fill="#1c2240"/><ellipse cx="19.5" cy="18.2" rx="7.2" ry="9.4" fill="#d4a38a"/><path d="M12 14.5 Q11.3 4 19.5 4 Q27.7 4 27 14.5 Q26 9.2 19.5 9.6 Q13 9.2 12 14.5Z" fill="#3b2d26"/><path d="M15.5 17 H18 M21.5 17 H24" stroke="#5a4038" stroke-width="1.2"/></g></svg>
<div class="t rp" style="left:1484.5px;top:2px">Paul Koetke</div>
<div class="t st" style="left:1724px">In Progress</div>
<div class="t due" style="left:1894px">05/15/25</div>
<div class="tri" style="left:690px;top:39px"></div><div class="tri" style="left:1874px;top:39px"></div>
</div>
<div class="row rc" style="top:400px;height:50px">
<div class="num" style="height:48px"><span class="numt">9</span></div>
<div class="cell" style="left:164px;width:532px;height:48px;background:#fff"></div>
<div class="cell" style="left:698px;width:722px;height:48px;background:#fff"></div>
<div class="cell" style="left:1422px;width:288px;height:48px;background:#fff"></div>
<div class="cell" style="left:1712px;width:168px;height:48px;background:#fff"></div>
<div class="cell" style="left:1882px;width:140px;height:48px;background:#fff"></div>
<div class="cell" style="left:2024px;width:138px;height:48px;background:#fff"></div>
<div class="cell" style="left:2164px;width:493px;height:48px;background:#fff"></div>
<div class="t task" style="left:274px">Confirm Insurance Coverage</div>
<div class="t det" style="left:710px">Verify property has adequate coverage</div>
<svg class="av" viewBox="0 0 40 40" width="40" height="40"><defs><clipPath id="avc9"><circle cx="20" cy="20" r="20"/></clipPath></defs><g clip-path="url(#avc9)"><rect width="40" height="40" fill="#9aa2a4"/><rect x="0" y="0" width="40" height="12" fill="#899192"/><rect x="0" y="11" width="12" height="25" fill="#bcd0da"/><rect x="3" y="13" width="7" height="15" fill="#dde9ec"/><rect x="26" y="15" width="14" height="17" fill="#d5e1e7"/><rect x="30" y="19" width="5" height="1.6" fill="#6d7882"/><rect x="30" y="23.5" width="5" height="1.6" fill="#6d7882"/><rect x="30" y="28" width="5" height="1.6" fill="#6d7882"/><rect x="34" y="30" width="6" height="7" fill="#141820"/><path d="M14 26 L26 25 L25.5 40 L14.5 40 Z" fill="#b3c5e8"/><path d="M0 40 V35 Q5 29 13.5 27.5 L17 40 Z" fill="#1f2643"/><path d="M25.5 25.5 Q34 26.5 40 30.5 V40 H23.5 Z" fill="#1c2240"/><ellipse cx="19.5" cy="18.2" rx="7.2" ry="9.4" fill="#d4a38a"/><path d="M12 14.5 Q11.3 4 19.5 4 Q27.7 4 27 14.5 Q26 9.2 19.5 9.6 Q13 9.2 12 14.5Z" fill="#3b2d26"/><path d="M15.5 17 H18 M21.5 17 H24" stroke="#5a4038" stroke-width="1.2"/></g></svg>
<div class="t rp" style="left:1484.5px;top:2px">Paul Koetke</div>
<div class="t st" style="left:1724px">Complete</div>
<div class="t due" style="left:1894px">05/04/25</div>
<div class="t cmp" style="left:2036px">07/10/25</div>
<div class="tri" style="left:690px;top:39px"></div><div class="tri" style="left:1874px;top:39px"></div>
</div>
<div class="row rg2" style="top:450px;height:50px">
<div class="num" style="height:48px"><span class="numt">10</span></div>
<div class="gsep" style="left:164px;width:2493px;top:0;height:48px"></div>
<div class="cell" style="left:164px;width:532px;height:48px;background:#74aff0"></div>
<div class="cell" style="left:698px;width:722px;height:48px;background:#74aff0"></div>
<div class="cell" style="left:1422px;width:288px;height:48px;background:#74aff0"></div>
<div class="cell" style="left:1712px;width:168px;height:48px;background:#74aff0"></div>
<div class="cell" style="left:1882px;width:140px;height:48px;background:#74aff0"></div>
<div class="cell" style="left:2024px;width:138px;height:48px;background:#74aff0"></div>
<div class="cell" style="left:2164px;width:493px;height:48px;background:#74aff0"></div>
<div class="cbox" style="left:210px"><i></i></div>
<div class="gt" style="left:244px">Finance</div>
<div class="tri" style="left:690px;top:39px"></div><div class="tri" style="left:1874px;top:39px"></div>
</div>
<div class="row rc" style="top:500px;height:50px">
<div class="num" style="height:48px"><span class="numt">11</span></div>
<div class="cell" style="left:164px;width:532px;height:48px;background:#fff"></div>
<div class="cell" style="left:698px;width:722px;height:48px;background:#fff"></div>
<div class="cell" style="left:1422px;width:288px;height:48px;background:#fff"></div>
<div class="cell" style="left:1712px;width:168px;height:48px;background:#fff"></div>
<div class="cell" style="left:1882px;width:140px;height:48px;background:#fff"></div>
<div class="cell" style="left:2024px;width:138px;height:48px;background:#fff"></div>
<div class="cell" style="left:2164px;width:493px;height:48px;background:#fff"></div>
<div class="t task" style="left:274px">Verify Funding Sources</div>
<div class="t det" style="left:710px">Ensure capital sources are confirmed</div>
<svg class="av" viewBox="0 0 40 40" width="40" height="40"><defs><clipPath id="avc11"><circle cx="20" cy="20" r="20"/></clipPath></defs><g clip-path="url(#avc11)"><rect width="40" height="40" fill="#9aa2a4"/><rect x="0" y="0" width="40" height="12" fill="#899192"/><rect x="0" y="11" width="12" height="25" fill="#bcd0da"/><rect x="3" y="13" width="7" height="15" fill="#dde9ec"/><rect x="26" y="15" width="14" height="17" fill="#d5e1e7"/><rect x="30" y="19" width="5" height="1.6" fill="#6d7882"/><rect x="30" y="23.5" width="5" height="1.6" fill="#6d7882"/><rect x="30" y="28" width="5" height="1.6" fill="#6d7882"/><rect x="34" y="30" width="6" height="7" fill="#141820"/><path d="M14 26 L26 25 L25.5 40 L14.5 40 Z" fill="#b3c5e8"/><path d="M0 40 V35 Q5 29 13.5 27.5 L17 40 Z" fill="#1f2643"/><path d="M25.5 25.5 Q34 26.5 40 30.5 V40 H23.5 Z" fill="#1c2240"/><ellipse cx="19.5" cy="18.2" rx="7.2" ry="9.4" fill="#d4a38a"/><path d="M12 14.5 Q11.3 4 19.5 4 Q27.7 4 27 14.5 Q26 9.2 19.5 9.6 Q13 9.2 12 14.5Z" fill="#3b2d26"/><path d="M15.5 17 H18 M21.5 17 H24" stroke="#5a4038" stroke-width="1.2"/></g></svg>
<div class="t rp" style="left:1484.5px;top:2px">Paul Koetke</div>
<div class="t st" style="left:1724px">Complete</div>
<div class="t due" style="left:1894px">05/05/25</div>
<div class="t cmp" style="left:2036px">07/10/25</div>
<div class="tri" style="left:690px;top:39px"></div><div class="tri" style="left:1874px;top:39px"></div>
</div>
<div class="row rc" style="top:550px;height:50px">
<div class="num" style="height:48px"><span class="numt">12</span></div>
<div class="cell" style="left:164px;width:532px;height:48px;background:#fff"></div>
<div class="cell" style="left:698px;width:722px;height:48px;background:#fff"></div>
<div class="cell" style="left:1422px;width:288px;height:48px;background:#fff"></div>
<div class="cell" style="left:1712px;width:168px;height:48px;background:#fff"></div>
<div class="cell" style="left:1882px;width:140px;height:48px;background:#fff"></div>
<div class="cell" style="left:2024px;width:138px;height:48px;background:#fff"></div>
<div class="cell" style="left:2164px;width:493px;height:48px;background:#fff"></div>
<div class="t task" style="left:274px">Approve Acquisition Costs</div>
<div class="t det" style="left:710px">Review final investment and expense data</div>
<svg class="av" viewBox="0 0 40 40" width="40" height="40"><defs><clipPath id="avc12"><circle cx="20" cy="20" r="20"/></clipPath></defs><g clip-path="url(#avc12)"><rect width="40" height="40" fill="#9aa2a4"/><rect x="0" y="0" width="40" height="12" fill="#899192"/><rect x="0" y="11" width="12" height="25" fill="#bcd0da"/><rect x="3" y="13" width="7" height="15" fill="#dde9ec"/><rect x="26" y="15" width="14" height="17" fill="#d5e1e7"/><rect x="30" y="19" width="5" height="1.6" fill="#6d7882"/><rect x="30" y="23.5" width="5" height="1.6" fill="#6d7882"/><rect x="30" y="28" width="5" height="1.6" fill="#6d7882"/><rect x="34" y="30" width="6" height="7" fill="#141820"/><path d="M14 26 L26 25 L25.5 40 L14.5 40 Z" fill="#b3c5e8"/><path d="M0 40 V35 Q5 29 13.5 27.5 L17 40 Z" fill="#1f2643"/><path d="M25.5 25.5 Q34 26.5 40 30.5 V40 H23.5 Z" fill="#1c2240"/><ellipse cx="19.5" cy="18.2" rx="7.2" ry="9.4" fill="#d4a38a"/><path d="M12 14.5 Q11.3 4 19.5 4 Q27.7 4 27 14.5 Q26 9.2 19.5 9.6 Q13 9.2 12 14.5Z" fill="#3b2d26"/><path d="M15.5 17 H18 M21.5 17 H24" stroke="#5a4038" stroke-width="1.2"/></g></svg>
<div class="t rp" style="left:1484.5px;top:2px">Paul Koetke</div>
<div class="t st" style="left:1724px">Complete</div>
<div class="t due" style="left:1894px">05/29/25</div>
<div class="t cmp" style="left:2036px">07/10/25</div>
<div class="tri" style="left:690px;top:39px"></div><div class="tri" style="left:1874px;top:39px"></div>
</div>
<div class="row rr" style="top:600px;height:50px">
<div class="num" style="height:48px"><span class="numt">13</span></div>
<div class="cell" style="left:164px;width:532px;height:48px;background:#fff"></div>
<div class="cell" style="left:698px;width:722px;height:48px;background:#fff"></div>
<div class="cell" style="left:1422px;width:288px;height:48px;background:#fff"></div>
<div class="cell" style="left:1712px;width:168px;height:48px;background:#fff"></div>
<div class="cell" style="left:1882px;width:140px;height:48px;background:#fff"></div>
<div class="cell" style="left:2024px;width:138px;height:48px;background:#fff"></div>
<div class="cell" style="left:2164px;width:493px;height:48px;background:#fff"></div>
<div class="t task" style="left:274px">Forecast Cash Flow</div>
<div class="t det" style="left:710px">Estimate property-level cash projections</div>
<svg class="av" viewBox="0 0 40 40" width="40" height="40"><defs><clipPath id="avc13"><circle cx="20" cy="20" r="20"/></clipPath></defs><g clip-path="url(#avc13)"><rect width="40" height="40" fill="#9aa2a4"/><rect x="0" y="0" width="40" height="12" fill="#899192"/><rect x="0" y="11" width="12" height="25" fill="#bcd0da"/><rect x="3" y="13" width="7" height="15" fill="#dde9ec"/><rect x="26" y="15" width="14" height="17" fill="#d5e1e7"/><rect x="30" y="19" width="5" height="1.6" fill="#6d7882"/><rect x="30" y="23.5" width="5" height="1.6" fill="#6d7882"/><rect x="30" y="28" width="5" height="1.6" fill="#6d7882"/><rect x="34" y="30" width="6" height="7" fill="#141820"/><path d="M14 26 L26 25 L25.5 40 L14.5 40 Z" fill="#b3c5e8"/><path d="M0 40 V35 Q5 29 13.5 27.5 L17 40 Z" fill="#1f2643"/><path d="M25.5 25.5 Q34 26.5 40 30.5 V40 H23.5 Z" fill="#1c2240"/><ellipse cx="19.5" cy="18.2" rx="7.2" ry="9.4" fill="#d4a38a"/><path d="M12 14.5 Q11.3 4 19.5 4 Q27.7 4 27 14.5 Q26 9.2 19.5 9.6 Q13 9.2 12 14.5Z" fill="#3b2d26"/><path d="M15.5 17 H18 M21.5 17 H24" stroke="#5a4038" stroke-width="1.2"/></g></svg>
<div class="t rp" style="left:1484.5px;top:2px">Paul Koetke</div>
<div class="t st" style="left:1724px">Not Started</div>
<div class="t due" style="left:1894px">05/06/25</div>
<div class="tri" style="left:690px;top:39px"></div><div class="tri" style="left:1874px;top:39px"></div>
</div>
<div class="row rg2" style="top:650px;height:50px">
<div class="num" style="height:48px"><span class="numt">14</span></div>
<div class="gsep" style="left:164px;width:2493px;top:0;height:48px"></div>
<div class="cell" style="left:164px;width:532px;height:48px;background:#74aff0"></div>
<div class="cell" style="left:698px;width:722px;height:48px;background:#74aff0"></div>
<div class="cell" style="left:1422px;width:288px;height:48px;background:#74aff0"></div>
<div class="cell" style="left:1712px;width:168px;height:48px;background:#74aff0"></div>
<div class="cell" style="left:1882px;width:140px;height:48px;background:#74aff0"></div>
<div class="cell" style="left:2024px;width:138px;height:48px;background:#74aff0"></div>
<div class="cell" style="left:2164px;width:493px;height:48px;background:#74aff0"></div>
<div class="cbox" style="left:210px"><i></i></div>
<div class="gt" style="left:244px">Operations</div>
<div class="tri" style="left:690px;top:39px"></div><div class="tri" style="left:1874px;top:39px"></div>
</div>
<div class="row rc" style="top:700px;height:50px">
<div class="num" style="height:48px"><span class="numt">15</span></div>
<div class="cell" style="left:164px;width:532px;height:48px;background:#fff"></div>
<div class="cell" style="left:698px;width:722px;height:48px;background:#fff"></div>
<div class="cell" style="left:1422px;width:288px;height:48px;background:#fff"></div>
<div class="cell" style="left:1712px;width:168px;height:48px;background:#fff"></div>
<div class="cell" style="left:1882px;width:140px;height:48px;background:#fff"></div>
<div class="cell" style="left:2024px;width:138px;height:48px;background:#fff"></div>
<div class="cell" style="left:2164px;width:493px;height:48px;background:#fff"></div>
<div class="t task" style="left:274px">Assign Property Manager</div>
<div class="t det" style="left:710px">Designate oversight for daily operations</div>
<svg class="av" viewBox="0 0 40 40" width="40" height="40"><defs><clipPath id="avc15"><circle cx="20" cy="20" r="20"/></clipPath></defs><g clip-path="url(#avc15)"><rect width="40" height="40" fill="#9aa2a4"/><rect x="0" y="0" width="40" height="12" fill="#899192"/><rect x="0" y="11" width="12" height="25" fill="#bcd0da"/><rect x="3" y="13" width="7" height="15" fill="#dde9ec"/><rect x="26" y="15" width="14" height="17" fill="#d5e1e7"/><rect x="30" y="19" width="5" height="1.6" fill="#6d7882"/><rect x="30" y="23.5" width="5" height="1.6" fill="#6d7882"/><rect x="30" y="28" width="5" height="1.6" fill="#6d7882"/><rect x="34" y="30" width="6" height="7" fill="#141820"/><path d="M14 26 L26 25 L25.5 40 L14.5 40 Z" fill="#b3c5e8"/><path d="M0 40 V35 Q5 29 13.5 27.5 L17 40 Z" fill="#1f2643"/><path d="M25.5 25.5 Q34 26.5 40 30.5 V40 H23.5 Z" fill="#1c2240"/><ellipse cx="19.5" cy="18.2" rx="7.2" ry="9.4" fill="#d4a38a"/><path d="M12 14.5 Q11.3 4 19.5 4 Q27.7 4 27 14.5 Q26 9.2 19.5 9.6 Q13 9.2 12 14.5Z" fill="#3b2d26"/><path d="M15.5 17 H18 M21.5 17 H24" stroke="#5a4038" stroke-width="1.2"/></g></svg>
<div class="t rp" style="left:1484.5px;top:2px">Paul Koetke</div>
<div class="t st" style="left:1724px">Complete</div>
<div class="t due" style="left:1894px">05/07/25</div>
<div class="t cmp" style="left:2036px">07/10/25</div>
<div class="tri" style="left:690px;top:39px"></div><div class="tri" style="left:1874px;top:39px"></div>
</div>
<div class="row rr" style="top:750px;height:50px">
<div class="num" style="height:48px"><span class="numt">16</span></div>
<div class="cell" style="left:164px;width:532px;height:48px;background:#fff"></div>
<div class="cell" style="left:698px;width:722px;height:48px;background:#fff"></div>
<div class="cell" style="left:1422px;width:288px;height:48px;background:#fff"></div>
<div class="cell" style="left:1712px;width:168px;height:48px;background:#fff"></div>
<div class="cell" style="left:1882px;width:140px;height:48px;background:#fff"></div>
<div class="cell" style="left:2024px;width:138px;height:48px;background:#fff"></div>
<div class="cell" style="left:2164px;width:493px;height:48px;background:#fff"></div>
<div class="t task" style="left:274px">Setup Vendor Accounts</div>
<div class="t det" style="left:710px">Create accounts for local service providers</div>
<svg class="av" viewBox="0 0 40 40" width="40" height="40"><defs><clipPath id="avc16"><circle cx="20" cy="20" r="20"/></clipPath></defs><g clip-path="url(#avc16)"><rect width="40" height="40" fill="#9aa2a4"/><rect x="0" y="0" width="40" height="12" fill="#899192"/><rect x="0" y="11" width="12" height="25" fill="#bcd0da"/><rect x="3" y="13" width="7" height="15" fill="#dde9ec"/><rect x="26" y="15" width="14" height="17" fill="#d5e1e7"/><rect x="30" y="19" width="5" height="1.6" fill="#6d7882"/><rect x="30" y="23.5" width="5" height="1.6" fill="#6d7882"/><rect x="30" y="28" width="5" height="1.6" fill="#6d7882"/><rect x="34" y="30" width="6" height="7" fill="#141820"/><path d="M14 26 L26 25 L25.5 40 L14.5 40 Z" fill="#b3c5e8"/><path d="M0 40 V35 Q5 29 13.5 27.5 L17 40 Z" fill="#1f2643"/><path d="M25.5 25.5 Q34 26.5 40 30.5 V40 H23.5 Z" fill="#1c2240"/><ellipse cx="19.5" cy="18.2" rx="7.2" ry="9.4" fill="#d4a38a"/><path d="M12 14.5 Q11.3 4 19.5 4 Q27.7 4 27 14.5 Q26 9.2 19.5 9.6 Q13 9.2 12 14.5Z" fill="#3b2d26"/><path d="M15.5 17 H18 M21.5 17 H24" stroke="#5a4038" stroke-width="1.2"/></g></svg>
<div class="t rp" style="left:1484.5px;top:2px">Paul Koetke</div>
<div class="t st" style="left:1724px">In Progress</div>
<div class="t due" style="left:1894px">05/05/25</div>
<div class="tri" style="left:690px;top:39px"></div><div class="tri" style="left:1874px;top:39px"></div>
</div>
<div class="row rc" style="top:800px;height:50px">
<div class="num" style="height:48px"><span class="numt">17</span></div>
<div class="cell" style="left:164px;width:532px;height:48px;background:#fff"></div>
<div class="cell" style="left:698px;width:722px;height:48px;background:#fff"></div>
<div class="cell" style="left:1422px;width:288px;height:48px;background:#fff"></div>
<div class="cell" style="left:1712px;width:168px;height:48px;background:#fff"></div>
<div class="cell" style="left:1882px;width:140px;height:48px;background:#fff"></div>
<div class="cell" style="left:2024px;width:138px;height:48px;background:#fff"></div>
<div class="cell" style="left:2164px;width:493px;height:48px;background:#fff"></div>
<div class="t task" style="left:274px">Develop SOPs</div>
<div class="t det" style="left:710px">Outline key property management procedures</div>
<svg class="av" viewBox="0 0 40 40" width="40" height="40"><defs><clipPath id="avc17"><circle cx="20" cy="20" r="20"/></clipPath></defs><g clip-path="url(#avc17)"><rect width="40" height="40" fill="#9aa2a4"/><rect x="0" y="0" width="40" height="12" fill="#899192"/><rect x="0" y="11" width="12" height="25" fill="#bcd0da"/><rect x="3" y="13" width="7" height="15" fill="#dde9ec"/><rect x="26" y="15" width="14" height="17" fill="#d5e1e7"/><rect x="30" y="19" width="5" height="1.6" fill="#6d7882"/><rect x="30" y="23.5" width="5" height="1.6" fill="#6d7882"/><rect x="30" y="28" width="5" height="1.6" fill="#6d7882"/><rect x="34" y="30" width="6" height="7" fill="#141820"/><path d="M14 26 L26 25 L25.5 40 L14.5 40 Z" fill="#b3c5e8"/><path d="M0 40 V35 Q5 29 13.5 27.5 L17 40 Z" fill="#1f2643"/><path d="M25.5 25.5 Q34 26.5 40 30.5 V40 H23.5 Z" fill="#1c2240"/><ellipse cx="19.5" cy="18.2" rx="7.2" ry="9.4" fill="#d4a38a"/><path d="M12 14.5 Q11.3 4 19.5 4 Q27.7 4 27 14.5 Q26 9.2 19.5 9.6 Q13 9.2 12 14.5Z" fill="#3b2d26"/><path d="M15.5 17 H18 M21.5 17 H24" stroke="#5a4038" stroke-width="1.2"/></g></svg>
<div class="t rp" style="left:1484.5px;top:2px">Paul Koetke</div>
<div class="t st" style="left:1724px">Complete</div>
<div class="t due" style="left:1894px">05/08/25</div>
<div class="t cmp" style="left:2036px">07/10/25</div>
<div class="tri" style="left:690px;top:39px"></div><div class="tri" style="left:1874px;top:39px"></div>
</div>
<div class="row rg2" style="top:850px;height:50px">
<div class="num" style="height:48px"><span class="numt">18</span></div>
<div class="gsep" style="left:164px;width:2493px;top:0;height:48px"></div>
<div class="cell" style="left:164px;width:532px;height:48px;background:#74aff0"></div>
<div class="cell" style="left:698px;width:722px;height:48px;background:#74aff0"></div>
<div class="cell" style="left:1422px;width:288px;height:48px;background:#74aff0"></div>
<div class="cell" style="left:1712px;width:168px;height:48px;background:#74aff0"></div>
<div class="cell" style="left:1882px;width:140px;height:48px;background:#74aff0"></div>
<div class="cell" style="left:2024px;width:138px;height:48px;background:#74aff0"></div>
<div class="cell" style="left:2164px;width:493px;height:48px;background:#74aff0"></div>
<div class="cbox" style="left:210px"><i></i></div>
<div class="gt" style="left:244px">IT</div>
<div class="tri" style="left:690px;top:39px"></div><div class="tri" style="left:1874px;top:39px"></div>
</div>
<div class="row rc" style="top:900px;height:50px">
<div class="num" style="height:48px"><span class="numt">19</span></div>
<div class="cell" style="left:164px;width:532px;height:48px;background:#fff"></div>
<div class="cell" style="left:698px;width:722px;height:48px;background:#fff"></div>
<div class="cell" style="left:1422px;width:288px;height:48px;background:#fff"></div>
<div class="cell" style="left:1712px;width:168px;height:48px;background:#fff"></div>
<div class="cell" style="left:1882px;width:140px;height:48px;background:#fff"></div>
<div class="cell" style="left:2024px;width:138px;height:48px;background:#fff"></div>
<div class="cell" style="left:2164px;width:493px;height:48px;background:#fff"></div>
<div class="t task" style="left:274px">Setup Network Access</div>
<div class="t det" style="left:710px">Configure internet and security systems</div>
<svg class="av" viewBox="0 0 40 40" width="40" height="40"><defs><clipPath id="avc19"><circle cx="20" cy="20" r="20"/></clipPath></defs><g clip-path="url(#avc19)"><rect width="40" height="40" fill="#9aa2a4"/><rect x="0" y="0" width="40" height="12" fill="#899192"/><rect x="0" y="11" width="12" height="25" fill="#bcd0da"/><rect x="3" y="13" width="7" height="15" fill="#dde9ec"/><rect x="26" y="15" width="14" height="17" fill="#d5e1e7"/><rect x="30" y="19" width="5" height="1.6" fill="#6d7882"/><rect x="30" y="23.5" width="5" height="1.6" fill="#6d7882"/><rect x="30" y="28" width="5" height="1.6" fill="#6d7882"/><rect x="34" y="30" width="6" height="7" fill="#141820"/><path d="M14 26 L26 25 L25.5 40 L14.5 40 Z" fill="#b3c5e8"/><path d="M0 40 V35 Q5 29 13.5 27.5 L17 40 Z" fill="#1f2643"/><path d="M25.5 25.5 Q34 26.5 40 30.5 V40 H23.5 Z" fill="#1c2240"/><ellipse cx="19.5" cy="18.2" rx="7.2" ry="9.4" fill="#d4a38a"/><path d="M12 14.5 Q11.3 4 19.5 4 Q27.7 4 27 14.5 Q26 9.2 19.5 9.6 Q13 9.2 12 14.5Z" fill="#3b2d26"/><path d="M15.5 17 H18 M21.5 17 H24" stroke="#5a4038" stroke-width="1.2"/></g></svg>
<div class="t rp" style="left:1484.5px;top:2px">Paul Koetke</div>
<div class="t st" style="left:1724px">Complete</div>
<div class="t due" style="left:1894px">05/09/25</div>
<div class="t cmp" style="left:2036px">07/10/25</div>
<div class="tri" style="left:690px;top:39px"></div><div class="tri" style="left:1874px;top:39px"></div>
</div>
<div class="row rc" style="top:950px;height:50px">
<div class="num" style="height:48px"><span class="numt">20</span></div>
<div class="cell" style="left:164px;width:532px;height:48px;background:#fff"></div>
<div class="cell" style="left:698px;width:722px;height:48px;background:#fff"></div>
<div class="cell" style="left:1422px;width:288px;height:48px;background:#fff"></div>
<div class="cell" style="left:1712px;width:168px;height:48px;background:#fff"></div>
<div class="cell" style="left:1882px;width:140px;height:48px;background:#fff"></div>
<div class="cell" style="left:2024px;width:138px;height:48px;background:#fff"></div>
<div class="cell" style="left:2164px;width:493px;height:48px;background:#fff"></div>
<div class="t task" style="left:274px">Install Property Software</div>
<div class="t det" style="left:710px">Deploy PMS and accounting tools</div>
<svg class="av" viewBox="0 0 40 40" width="40" height="40"><defs><clipPath id="avc20"><circle cx="20" cy="20" r="20"/></clipPath></defs><g clip-path="url(#avc20)"><rect width="40" height="40" fill="#9aa2a4"/><rect x="0" y="0" width="40" height="12" fill="#899192"/><rect x="0" y="11" width="12" height="25" fill="#bcd0da"/><rect x="3" y="13" width="7" height="15" fill="#dde9ec"/><rect x="26" y="15" width="14" height="17" fill="#d5e1e7"/><rect x="30" y="19" width="5" height="1.6" fill="#6d7882"/><rect x="30" y="23.5" width="5" height="1.6" fill="#6d7882"/><rect x="30" y="28" width="5" height="1.6" fill="#6d7882"/><rect x="34" y="30" width="6" height="7" fill="#141820"/><path d="M14 26 L26 25 L25.5 40 L14.5 40 Z" fill="#b3c5e8"/><path d="M0 40 V35 Q5 29 13.5 27.5 L17 40 Z" fill="#1f2643"/><path d="M25.5 25.5 Q34 26.5 40 30.5 V40 H23.5 Z" fill="#1c2240"/><ellipse cx="19.5" cy="18.2" rx="7.2" ry="9.4" fill="#d4a38a"/><path d="M12 14.5 Q11.3 4 19.5 4 Q27.7 4 27 14.5 Q26 9.2 19.5 9.6 Q13 9.2 12 14.5Z" fill="#3b2d26"/><path d="M15.5 17 H18 M21.5 17 H24" stroke="#5a4038" stroke-width="1.2"/></g></svg>
<div class="t rp" style="left:1484.5px;top:2px">Paul Koetke</div>
<div class="t st" style="left:1724px">Complete</div>
<div class="t due" style="left:1894px">05/14/25</div>
<div class="t cmp" style="left:2036px">07/10/25</div>
<div class="tri" style="left:690px;top:39px"></div><div class="tri" style="left:1874px;top:39px"></div>
</div>
<div class="row rr" style="top:1000px;height:50px">
<div class="num" style="height:48px"><span class="numt">21</span></div>
<div class="cell" style="left:164px;width:532px;height:48px;background:#fff"></div>
<div class="cell" style="left:698px;width:722px;height:48px;background:#fff"></div>
<div class="cell" style="left:1422px;width:288px;height:48px;background:#fff"></div>
<div class="cell" style="left:1712px;width:168px;height:48px;background:#fff"></div>
<div class="cell" style="left:1882px;width:140px;height:48px;background:#fff"></div>
<div class="cell" style="left:2024px;width:138px;height:48px;background:#fff"></div>
<div class="cell" style="left:2164px;width:493px;height:48px;background:#fff"></div>
<div class="t task" style="left:274px">Create User Accounts</div>
<div class="t det" style="left:710px">Provision staff logins and permissions</div>
<svg class="av" viewBox="0 0 40 40" width="40" height="40"><defs><clipPath id="avc21"><circle cx="20" cy="20" r="20"/></clipPath></defs><g clip-path="url(#avc21)"><rect width="40" height="40" fill="#9aa2a4"/><rect x="0" y="0" width="40" height="12" fill="#899192"/><rect x="0" y="11" width="12" height="25" fill="#bcd0da"/><rect x="3" y="13" width="7" height="15" fill="#dde9ec"/><rect x="26" y="15" width="14" height="17" fill="#d5e1e7"/><rect x="30" y="19" width="5" height="1.6" fill="#6d7882"/><rect x="30" y="23.5" width="5" height="1.6" fill="#6d7882"/><rect x="30" y="28" width="5" height="1.6" fill="#6d7882"/><rect x="34" y="30" width="6" height="7" fill="#141820"/><path d="M14 26 L26 25 L25.5 40 L14.5 40 Z" fill="#b3c5e8"/><path d="M0 40 V35 Q5 29 13.5 27.5 L17 40 Z" fill="#1f2643"/><path d="M25.5 25.5 Q34 26.5 40 30.5 V40 H23.5 Z" fill="#1c2240"/><ellipse cx="19.5" cy="18.2" rx="7.2" ry="9.4" fill="#d4a38a"/><path d="M12 14.5 Q11.3 4 19.5 4 Q27.7 4 27 14.5 Q26 9.2 19.5 9.6 Q13 9.2 12 14.5Z" fill="#3b2d26"/><path d="M15.5 17 H18 M21.5 17 H24" stroke="#5a4038" stroke-width="1.2"/></g></svg>
<div class="t rp" style="left:1484.5px;top:2px">Paul Koetke</div>
<div class="t st" style="left:1724px">Not Started</div>
<div class="t due" style="left:1894px">05/10/25</div>
<div class="tri" style="left:690px;top:39px"></div><div class="tri" style="left:1874px;top:39px"></div>
</div>
<div class="row rg2" style="top:1050px;height:50px">
<div class="num" style="height:48px"><span class="numt">22</span></div>
<div class="gsep" style="left:164px;width:2493px;top:0;height:48px"></div>
<div class="cell" style="left:164px;width:532px;height:48px;background:#74aff0"></div>
<div class="cell" style="left:698px;width:722px;height:48px;background:#74aff0"></div>
<div class="cell" style="left:1422px;width:288px;height:48px;background:#74aff0"></div>
<div class="cell" style="left:1712px;width:168px;height:48px;background:#74aff0"></div>
<div class="cell" style="left:1882px;width:140px;height:48px;background:#74aff0"></div>
<div class="cell" style="left:2024px;width:138px;height:48px;background:#74aff0"></div>
<div class="cell" style="left:2164px;width:493px;height:48px;background:#74aff0"></div>
<div class="cbox" style="left:210px"><i></i></div>
<div class="gt" style="left:244px">Human Resources</div>
<div class="tri" style="left:690px;top:39px"></div><div class="tri" style="left:1874px;top:39px"></div>
</div>
<div class="row rc" style="top:1100px;height:82px">
<div class="num" style="height:80px"><span class="numt">23</span></div>
<div class="cell" style="left:164px;width:532px;height:80px;background:#fff"></div>
<div class="cell" style="left:698px;width:722px;height:80px;background:#fff"></div>
<div class="cell" style="left:1422px;width:288px;height:80px;background:#fff"></div>
<div class="cell" style="left:1712px;width:168px;height:80px;background:#fff"></div>
<div class="cell" style="left:1882px;width:140px;height:80px;background:#fff"></div>
<div class="cell" style="left:2024px;width:138px;height:80px;background:#fff"></div>
<div class="cell" style="left:2164px;width:493px;height:80px;background:#fff"></div>
<div class="t task" style="left:274px">Plan Staffing Needs</div>
<div class="t det" style="left:710px">Estimate staffing requirements for property</div>
<svg class="av" viewBox="0 0 40 40" width="40" height="40"><defs><clipPath id="avc23"><circle cx="20" cy="20" r="20"/></clipPath></defs><g clip-path="url(#avc23)"><rect width="40" height="40" fill="#9aa2a4"/><rect x="0" y="0" width="40" height="12" fill="#899192"/><rect x="0" y="11" width="12" height="25" fill="#bcd0da"/><rect x="3" y="13" width="7" height="15" fill="#dde9ec"/><rect x="26" y="15" width="14" height="17" fill="#d5e1e7"/><rect x="30" y="19" width="5" height="1.6" fill="#6d7882"/><rect x="30" y="23.5" width="5" height="1.6" fill="#6d7882"/><rect x="30" y="28" width="5" height="1.6" fill="#6d7882"/><rect x="34" y="30" width="6" height="7" fill="#141820"/><path d="M14 26 L26 25 L25.5 40 L14.5 40 Z" fill="#b3c5e8"/><path d="M0 40 V35 Q5 29 13.5 27.5 L17 40 Z" fill="#1f2643"/><path d="M25.5 25.5 Q34 26.5 40 30.5 V40 H23.5 Z" fill="#1c2240"/><ellipse cx="19.5" cy="18.2" rx="7.2" ry="9.4" fill="#d4a38a"/><path d="M12 14.5 Q11.3 4 19.5 4 Q27.7 4 27 14.5 Q26 9.2 19.5 9.6 Q13 9.2 12 14.5Z" fill="#3b2d26"/><path d="M15.5 17 H18 M21.5 17 H24" stroke="#5a4038" stroke-width="1.2"/></g></svg>
<div class="t rp" style="left:1484.5px;top:2px">Paul Koetke</div>
<div class="t st" style="left:1724px">Complete</div>
<div class="t due" style="left:1894px">05/11/25</div>
<div class="t cmp" style="left:2036px">07/10/25</div>
<div class="tri" style="left:690px;top:71px"></div><div class="tri" style="left:1874px;top:71px"></div>
</div>
<div class="row rc" style="top:1182px;height:82px">
<div class="num" style="height:80px"><span class="numt">24</span></div>
<div class="cell" style="left:164px;width:532px;height:80px;background:#fff"></div>
<div class="cell" style="left:698px;width:722px;height:80px;background:#fff"></div>
<div class="cell" style="left:1422px;width:288px;height:80px;background:#fff"></div>
<div class="cell" style="left:1712px;width:168px;height:80px;background:#fff"></div>
<div class="cell" style="left:1882px;width:140px;height:80px;background:#fff"></div>
<div class="cell" style="left:2024px;width:138px;height:80px;background:#fff"></div>
<div class="cell" style="left:2164px;width:493px;height:80px;background:#fff"></div>
<div class="t task" style="left:274px">Post Job Openings</div>
<div class="t det" style="left:710px">Begin recruiting key personnel</div>
<svg class="av" viewBox="0 0 40 40" width="40" height="40"><defs><clipPath id="avc24"><circle cx="20" cy="20" r="20"/></clipPath></defs><g clip-path="url(#avc24)"><rect width="40" height="40" fill="#9aa2a4"/><rect x="0" y="0" width="40" height="12" fill="#899192"/><rect x="0" y="11" width="12" height="25" fill="#bcd0da"/><rect x="3" y="13" width="7" height="15" fill="#dde9ec"/><rect x="26" y="15" width="14" height="17" fill="#d5e1e7"/><rect x="30" y="19" width="5" height="1.6" fill="#6d7882"/><rect x="30" y="23.5" width="5" height="1.6" fill="#6d7882"/><rect x="30" y="28" width="5" height="1.6" fill="#6d7882"/><rect x="34" y="30" width="6" height="7" fill="#141820"/><path d="M14 26 L26 25 L25.5 40 L14.5 40 Z" fill="#b3c5e8"/><path d="M0 40 V35 Q5 29 13.5 27.5 L17 40 Z" fill="#1f2643"/><path d="M25.5 25.5 Q34 26.5 40 30.5 V40 H23.5 Z" fill="#1c2240"/><ellipse cx="19.5" cy="18.2" rx="7.2" ry="9.4" fill="#d4a38a"/><path d="M12 14.5 Q11.3 4 19.5 4 Q27.7 4 27 14.5 Q26 9.2 19.5 9.6 Q13 9.2 12 14.5Z" fill="#3b2d26"/><path d="M15.5 17 H18 M21.5 17 H24" stroke="#5a4038" stroke-width="1.2"/></g></svg>
<div class="t rp" style="left:1484.5px;top:2px">Paul Koetke</div>
<div class="t st" style="left:1724px">Complete</div>
<div class="t due" style="left:1894px">05/14/25</div>
<div class="t cmp" style="left:2036px">07/10/25</div>
<div class="tri" style="left:690px;top:71px"></div><div class="tri" style="left:1874px;top:71px"></div>
</div>
<div class="row rc" style="top:1264px;height:50px">
<div class="num" style="height:48px"><span class="numt">25</span></div>
<div class="cell" style="left:164px;width:532px;height:48px;background:#fff"></div>
<div class="cell" style="left:698px;width:722px;height:48px;background:#fff"></div>
<div class="cell" style="left:1422px;width:288px;height:48px;background:#fff"></div>
<div class="cell" style="left:1712px;width:168px;height:48px;background:#fff"></div>
<div class="cell" style="left:1882px;width:140px;height:48px;background:#fff"></div>
<div class="cell" style="left:2024px;width:138px;height:48px;background:#fff"></div>
<div class="cell" style="left:2164px;width:493px;height:48px;background:#fff"></div>
<div class="t task" style="left:274px">Coordinate Onboarding</div>
<div class="t det" style="left:710px">Prepare training for new hires</div>
<svg class="av" viewBox="0 0 40 40" width="40" height="40"><defs><clipPath id="avc25"><circle cx="20" cy="20" r="20"/></clipPath></defs><g clip-path="url(#avc25)"><rect width="40" height="40" fill="#9aa2a4"/><rect x="0" y="0" width="40" height="12" fill="#899192"/><rect x="0" y="11" width="12" height="25" fill="#bcd0da"/><rect x="3" y="13" width="7" height="15" fill="#dde9ec"/><rect x="26" y="15" width="14" height="17" fill="#d5e1e7"/><rect x="30" y="19" width="5" height="1.6" fill="#6d7882"/><rect x="30" y="23.5" width="5" height="1.6" fill="#6d7882"/><rect x="30" y="28" width="5" height="1.6" fill="#6d7882"/><rect x="34" y="30" width="6" height="7" fill="#141820"/><path d="M14 26 L26 25 L25.5 40 L14.5 40 Z" fill="#b3c5e8"/><path d="M0 40 V35 Q5 29 13.5 27.5 L17 40 Z" fill="#1f2643"/><path d="M25.5 25.5 Q34 26.5 40 30.5 V40 H23.5 Z" fill="#1c2240"/><ellipse cx="19.5" cy="18.2" rx="7.2" ry="9.4" fill="#d4a38a"/><path d="M12 14.5 Q11.3 4 19.5 4 Q27.7 4 27 14.5 Q26 9.2 19.5 9.6 Q13 9.2 12 14.5Z" fill="#3b2d26"/><path d="M15.5 17 H18 M21.5 17 H24" stroke="#5a4038" stroke-width="1.2"/></g></svg>
<div class="t rp" style="left:1484.5px;top:2px">Paul Koetke</div>
<div class="t st" style="left:1724px">Complete</div>
<div class="t due" style="left:1894px">05/12/25</div>
<div class="t cmp" style="left:2036px">07/10/25</div>
<div class="tri" style="left:690px;top:39px"></div><div class="tri" style="left:1874px;top:39px"></div>
</div>
</div>
<div class="abs" style="left:224px;top:1612px;width:132px;height:32px;background:#f6f5f3"></div>
<div class="abs" style="left:356px;top:1616px;width:2556px;height:28px;background:#fff"></div>
<div class="abs" style="left:470px;top:1624px;width:2069px;height:16px;border-radius:8px;background:#a1a1a1"></div>
<div class="abs" style="left:2881px;top:320px;width:31px;height:1296px;background:#fff"></div>
<div class="abs" style="left:2890px;top:326px;width:16px;height:549px;border-radius:8px;background:#a1a1a1"></div>

<!-- RIGHT PANEL -->
<div id="rp"></div>
<svg class="ico" style="left:2946px;top:223px" width="40" height="38" viewBox="0 0 40 38"><path d="M1.5 1.5 H38.5 V27 H15 L9 33.5 V27 H1.5 Z" stroke="#3d3d3d" stroke-width="2.6" fill="none" stroke-linecap="round" stroke-linejoin="round"/></svg>
<svg class="ico" style="left:2946px;top:316px" width="40" height="40" viewBox="0 0 40 40"><g transform="translate(-0.5,-1.2) scale(1.72)"><path d="M20.4 9.2 L12.25 17.35 A5 5 0 0 1 5.18 10.28 L13.33 2.13 A3.3 3.3 0 0 1 18 6.8 L9.85 14.95 A1.65 1.65 0 0 1 7.52 12.62 L14.2 5.94" stroke="#3d3d3d" stroke-width="1.55" fill="none" stroke-linecap="round" stroke-linejoin="round"/></g></svg>
<svg class="ico" style="left:2946px;top:411px" width="40" height="42" viewBox="0 0 40 42"><path d="M11.5 2 H29.5 M7.5 8.2 H32.5" stroke="#3d3d3d" stroke-width="2.6" fill="none" stroke-linecap="round" stroke-linejoin="round"/><path d="M3.5 14 H36.5 C37.6 14 38.5 14.9 38.5 16 V30.5 C38.5 35.5 34.5 39.5 29.5 39.5 H3.5 C2.4 39.5 1.5 38.6 1.5 37.5 V16 C1.5 14.9 2.4 14 3.5 14Z" stroke="#3d3d3d" stroke-width="2.6" fill="none" stroke-linecap="round" stroke-linejoin="round"/><path d="M38.5 30 H29.5 V39.5" stroke="#3d3d3d" stroke-width="2.6" fill="none" stroke-linecap="round" stroke-linejoin="round"/></svg>
<svg class="ico" style="left:2946px;top:507px" width="42" height="42" viewBox="0 0 42 42"><path d="M35.5 2 H2 V39 H29" stroke="#3d3d3d" stroke-width="2.6" fill="none" stroke-linecap="round" stroke-linejoin="round"/><path d="M35.5 2 V28" stroke="#3d3d3d" stroke-width="2.6" fill="none" stroke-linecap="round" stroke-linejoin="round"/><path d="M30 26 L35.5 33.5 L41 26 Z" fill="#3d3d3d"/><text x="7.5" y="30.5" font-family="Liberation Serif" font-weight="700" font-size="27" fill="#3d3d3d">B</text></svg>
<svg class="ico" style="left:2946px;top:604px" width="40" height="40" viewBox="0 0 40 40"><path d="M20.5 35 A16 16 0 0 1 9.6 7" stroke="#3d3d3d" stroke-width="2.6" fill="none" stroke-linecap="round" stroke-linejoin="round"/><path d="M4.2 7 H9.8 V12.4" stroke="#3d3d3d" stroke-width="2.6" fill="none" stroke-linecap="round" stroke-linejoin="round"/><path d="M20 3 A16 16 0 0 1 30.2 33" stroke="#3d3d3d" stroke-width="2.6" fill="none" stroke-linecap="round" stroke-linejoin="round"/><path d="M35.8 33.2 H30.2 V27.8" stroke="#3d3d3d" stroke-width="2.6" fill="none" stroke-linecap="round" stroke-linejoin="round"/><path d="M13.8 20.2 L18.2 24.6 L26 16.5" stroke="#3d3d3d" stroke-width="2.6" fill="none" stroke-linecap="round" stroke-linejoin="round"/></svg>
<svg class="ico" style="left:2949px;top:698px" width="34" height="42" viewBox="0 0 34 42"><path d="M2 2 H21 L32 13 V40 H2 Z" stroke="#3d3d3d" stroke-width="2.6" fill="none" stroke-linecap="round" stroke-linejoin="round"/><path d="M21 2 V13 H32" stroke="#3d3d3d" stroke-width="2.6" fill="none" stroke-linecap="round" stroke-linejoin="round"/><path d="M17 33 V21 M11.5 26 L17 20.5 L22.5 26" stroke="#3d3d3d" stroke-width="2.6" fill="none" stroke-linecap="round" stroke-linejoin="round"/></svg>
<svg class="ico" style="left:2946px;top:796px" width="41" height="41" viewBox="0 0 41 41"><circle cx="20.5" cy="20.5" r="18.8" stroke="#3d3d3d" stroke-width="2.6" fill="none" stroke-linecap="round" stroke-linejoin="round"/><path d="M7 21 H14 L17.5 15 L22.5 26 L26 20.5 H33.5" stroke="#3d3d3d" stroke-width="2.6" fill="none" stroke-linecap="round" stroke-linejoin="round"/></svg>
<svg class="ico" style="left:2946px;top:891px" width="41" height="42" viewBox="0 0 41 42"><path d="M10.5 1.5 H38 C38.6 1.5 39 1.9 39 2.5 V28.5 Q39 39.5 28 39.5 H10.5 C9.9 39.5 9.5 39.1 9.5 38.5 V2.5 C9.5 1.9 9.9 1.5 10.5 1.5Z" stroke="#3d3d3d" stroke-width="2.6" fill="none" stroke-linecap="round" stroke-linejoin="round"/><path d="M39 28.2 H28.2 V39.5" stroke="#3d3d3d" stroke-width="2.6" fill="none" stroke-linecap="round" stroke-linejoin="round"/><rect x="1.5" y="7.2" width="15" height="26.5" rx="2" fill="#fff" stroke="#3d3d3d" stroke-width="2.6"/><path d="M7.2 14.6 H10.8 M7.2 20.4 H10.8 M7.2 26.2 H10.8" stroke="#3d3d3d" stroke-width="2.6" fill="none" stroke-linecap="round" stroke-linejoin="round" stroke-width="3"/></svg>
<svg class="ico" style="left:2946px;top:991px" width="41" height="32" viewBox="0 0 41 32"><circle cx="11.5" cy="8.8" r="5" stroke="#3d3d3d" stroke-width="2.6" fill="none" stroke-linecap="round" stroke-linejoin="round"/><path d="M1.8 30 C1.8 24 5 20 10.5 20 H12.8" stroke="#3d3d3d" stroke-width="2.6" fill="none" stroke-linecap="round" stroke-linejoin="round"/><rect x="21.3" y="5.9" width="17.4" height="7.4" rx="1" stroke="#3d3d3d" stroke-width="2.6" fill="none" stroke-linecap="round" stroke-linejoin="round"/><rect x="21.3" y="20" width="15" height="7.4" rx="1" stroke="#3d3d3d" stroke-width="2.6" fill="none" stroke-linecap="round" stroke-linejoin="round"/></svg>
<svg class="ico" style="left:2946px;top:1083px" width="41" height="42" viewBox="0 0 41 42"><rect x="1.5" y="1.5" width="37.5" height="37.5" rx="1" stroke="#3d3d3d" stroke-width="2.6" fill="none" stroke-linecap="round" stroke-linejoin="round"/><path d="M9.6 20.5 V31.4 M16.8 10.2 V31.4 M23 15.4 V31.4 M29.4 21.8 V31.4" stroke="#3d3d3d" stroke-width="2.6" fill="none" stroke-linecap="round" stroke-linejoin="round" stroke-width="3"/></svg>
<svg class="ico" style="left:2946px;top:1178px" width="42" height="44" viewBox="0 0 42 44"><path d="M0.3 41.4 L5.9 35.7 M34.1 7.4 L39.8 2" stroke="#1c1c1c" stroke-width="2.7" fill="none" stroke-linecap="butt" stroke-linejoin="round"/><path d="M9.9 20.2 L21.2 31.1 L17 35.46 A7.85 7.85 0 0 1 5.7 24.56 Z" stroke="#1c1c1c" stroke-width="2.7" fill="none" stroke-linecap="butt" stroke-linejoin="round"/><path d="M18.44 12.1 L29.8 23.4 L34.17 18.86 A8.03 8.03 0 0 0 22.8 7.56 Z" stroke="#1c1c1c" stroke-width="2.7" fill="none" stroke-linecap="butt" stroke-linejoin="round"/><path d="M12.2 21.9 L17.2 17.4 M20.4 28.6 L24.6 24.6" stroke="#1c1c1c" stroke-width="2.7" fill="none" stroke-linecap="butt" stroke-linejoin="round"/></svg>
<svg class="ico" style="left:2944px;top:1250px" width="48" height="64" viewBox="0 0 48 64"><path d="M17 33.9 Q19.6 47.9 33.6 50.5 Q19.6 53.1 17 67.1 Q14.4 53.1 0.3999999999999986 50.5 Q14.4 47.9 17 33.9Z" fill="#3d3d3d"/><path d="M35 21.9 Q36.7 30.7 45.5 32.4 Q36.7 34.1 35 42.9 Q33.3 34.1 24.5 32.4 Q33.3 30.7 35 21.9Z" fill="#3d3d3d"/></svg>
<svg class="ico" style="left:2942px;top:1373px" width="48" height="36" viewBox="0 0 48 36"><path d="M2 18 C8 8 15.5 3 24 3 C32.5 3 40 8 46 18 C40 28 32.5 33 24 33 C15.5 33 8 28 2 18Z" fill="none" stroke="#111" stroke-width="2.4"/><circle cx="24" cy="15.5" r="9.5" fill="none" stroke="#111" stroke-width="2.4"/><circle cx="24" cy="14.5" r="4.6" fill="#111"/></svg>
</body></html>
